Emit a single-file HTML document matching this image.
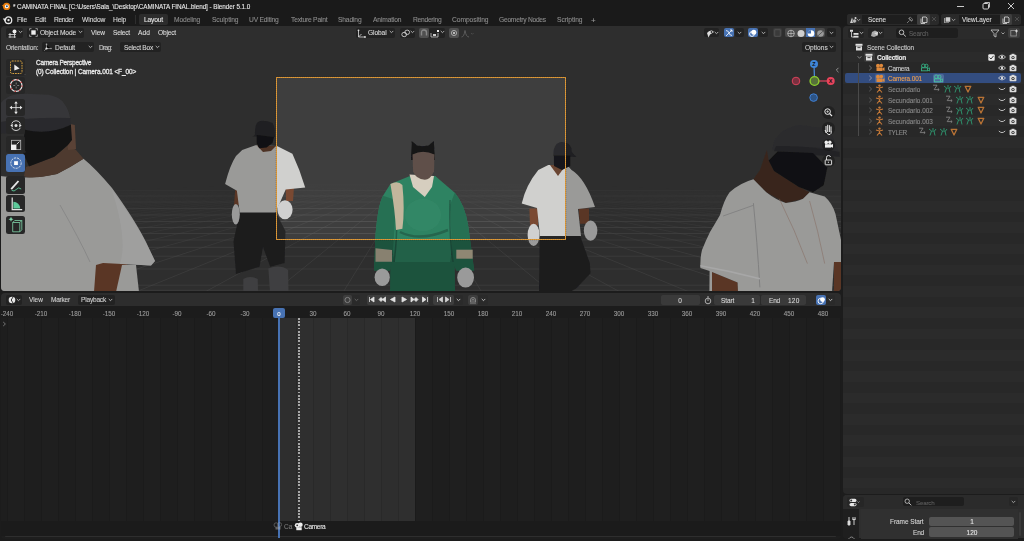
<!DOCTYPE html>
<html><head><meta charset="utf-8">
<style>
*{box-sizing:border-box;margin:0;padding:0}
html,body{-webkit-font-smoothing:antialiased;width:1024px;height:541px;overflow:hidden;background:#1c1c1c;font-family:"Liberation Sans",sans-serif;color:#d6d6d6;font-size:7px}
.a{position:absolute}
.t{position:absolute;white-space:nowrap;line-height:1;will-change:transform;-webkit-text-stroke:0.1px currentColor}
</style></head><body>

<div class="a" style="left:0.00px;top:0.00px;width:1024.00px;height:13.00px;background:#1a1a1a;border-radius:0px;"></div>
<svg class="a" style="left:1px;top:1px" width="10" height="10" viewBox="0 0 10 10"><circle cx="5.6" cy="5.4" r="3.6" fill="#e87d0d"/><path d="M0.8 4.2 L5 4.2 L3 6.6 Z" fill="#e87d0d"/><circle cx="5.8" cy="5.4" r="1.9" fill="#fff"/><circle cx="5.9" cy="5.3" r="1.0" fill="#265787"/></svg>
<div class="t" style="left:12.80px;top:4.39px;font-size:6.35px;color:#e8e8e8;font-weight:normal;letter-spacing:-0.059px;">* CAMINATA FINAL [C:\Users\Sala_\Desktop\CAMINATA FINAL.blend] - Blender 5.1.0</div>
<svg class="a" style="left:955px;top:1px" width="69" height="11" viewBox="0 0 69 11"><path d="M2 5.5 H9" stroke="#e0e0e0" stroke-width="0.9"/><rect x="28" y="2.5" width="5.5" height="5.5" rx="1" stroke="#e0e0e0" stroke-width="0.9" fill="none"/><path d="M29.5 1.5 H34.5 V6.5" stroke="#e0e0e0" stroke-width="0.8" fill="none"/><path d="M53 2 L59 8 M59 2 L53 8" stroke="#e0e0e0" stroke-width="0.9"/></svg>
<div class="a" style="left:0.00px;top:13.00px;width:1024.00px;height:13.00px;background:#1a1a1a;border-radius:0px;"></div>
<svg class="a" style="left:2px;top:14.5px" width="11" height="10" viewBox="0 0 11 10"><circle cx="6.4" cy="5.2" r="3.3" fill="none" stroke="#e6e6e6" stroke-width="1.3"/><circle cx="6.5" cy="5.1" r="1.2" fill="#e6e6e6"/><path d="M0.8 3.6 L5 3.6 L2.8 6.4 Z" fill="#e6e6e6"/></svg>
<div class="t" style="left:16.70px;top:17.29px;font-size:6.7px;color:#d8d8d8;font-weight:normal;letter-spacing:-0.224px;">File</div>
<div class="t" style="left:34.70px;top:17.29px;font-size:6.7px;color:#d8d8d8;font-weight:normal;letter-spacing:-0.161px;">Edit</div>
<div class="t" style="left:53.90px;top:17.29px;font-size:6.7px;color:#d8d8d8;font-weight:normal;letter-spacing:-0.413px;">Render</div>
<div class="t" style="left:81.60px;top:17.29px;font-size:6.7px;color:#d8d8d8;font-weight:normal;letter-spacing:-0.072px;">Window</div>
<div class="t" style="left:112.80px;top:17.29px;font-size:6.7px;color:#d8d8d8;font-weight:normal;letter-spacing:-0.195px;">Help</div>
<div class="a" style="left:134.60px;top:15.00px;width:0.80px;height:9.00px;background:#2e2e2e;border-radius:0px;"></div>
<div class="a" style="left:139.00px;top:14.00px;width:29.00px;height:10.80px;background:#2c2c2c;border-radius:2px;"></div>
<div class="t" style="left:144.00px;top:17.29px;font-size:6.7px;color:#e6e6e6;font-weight:normal;letter-spacing:-0.186px;">Layout</div>
<div class="t" style="left:173.80px;top:17.29px;font-size:6.7px;color:#8c8c8c;font-weight:normal;letter-spacing:-0.124px;">Modeling</div>
<div class="t" style="left:211.50px;top:17.29px;font-size:6.7px;color:#8c8c8c;font-weight:normal;letter-spacing:-0.118px;">Sculpting</div>
<div class="t" style="left:249.30px;top:17.29px;font-size:6.7px;color:#8c8c8c;font-weight:normal;letter-spacing:-0.196px;">UV Editing</div>
<div class="t" style="left:290.80px;top:17.29px;font-size:6.7px;color:#8c8c8c;font-weight:normal;letter-spacing:-0.208px;">Texture Paint</div>
<div class="t" style="left:338.00px;top:17.29px;font-size:6.7px;color:#8c8c8c;font-weight:normal;letter-spacing:-0.156px;">Shading</div>
<div class="t" style="left:372.50px;top:17.29px;font-size:6.7px;color:#8c8c8c;font-weight:normal;letter-spacing:-0.144px;">Animation</div>
<div class="t" style="left:412.50px;top:17.29px;font-size:6.7px;color:#8c8c8c;font-weight:normal;letter-spacing:-0.269px;">Rendering</div>
<div class="t" style="left:452.00px;top:17.29px;font-size:6.7px;color:#8c8c8c;font-weight:normal;letter-spacing:-0.067px;">Compositing</div>
<div class="t" style="left:499.00px;top:17.29px;font-size:6.7px;color:#8c8c8c;font-weight:normal;letter-spacing:-0.260px;">Geometry Nodes</div>
<div class="t" style="left:557.00px;top:17.29px;font-size:6.7px;color:#8c8c8c;font-weight:normal;letter-spacing:-0.063px;">Scripting</div>
<div class="t" style="left:590.50px;top:16.80px;font-size:8px;color:#9a9a9a;font-weight:normal;">+</div>
<div class="a" style="left:847.00px;top:14.00px;width:91.50px;height:10.90px;background:#2a2a2a;border-radius:2.5px;"></div>
<div class="a" style="left:862.00px;top:14.50px;width:55.00px;height:9.90px;background:#1e1e1e;border-radius:0px;"></div>
<div class="a" style="left:847.00px;top:14.00px;width:14.00px;height:10.90px;background:#2a2a2a;border-radius:2.5px;"></div>
<svg class="a" style="left:849px;top:15.5px" width="10" height="8" viewBox="0 0 10 8"><path d="M1 7 L3 1.5 L5 7 Z" fill="#ccc"/><circle cx="5.5" cy="5" r="2" fill="#bbb" stroke="#222" stroke-width="0.5"/><circle cx="6.5" cy="2" r="1" fill="#ddd"/></svg>
<svg class="a" style="left:856.00px;top:17.50px" width="5" height="4" viewBox="0 0 5 4"><path d="M1 1.2 L2.5 2.7 L4 1.2" stroke="#aaa" stroke-width="0.9" fill="none" stroke-linecap="round"/></svg>
<div class="t" style="left:867.60px;top:16.98px;font-size:6.4px;color:#dcdcdc;font-weight:normal;">Scene</div>
<svg class="a" style="left:906px;top:15.5px" width="8" height="8" viewBox="0 0 8 8"><path d="M1 7 L3.5 4.5 M3 2 L6 5 M4.2 1 L7 3.8 L5.4 5.2 L2.6 2.6 Z" stroke="#8a8a8a" stroke-width="0.8" fill="none"/></svg>
<div class="a" style="left:917.00px;top:14.30px;width:12.50px;height:10.30px;background:#3e3e3e;border-radius:1.5px;"></div>
<svg class="a" style="left:919.5px;top:15.5px" width="8" height="8" viewBox="0 0 8 8"><path d="M2.5 1 H6 L7 2 V6.5 H2.5 Z M1 2.5 V7.5 H5" stroke="#ddd" stroke-width="0.8" fill="none"/></svg>
<svg class="a" style="left:930.5px;top:16px" width="6" height="6" viewBox="0 0 6 6"><path d="M1 1 L5 5 M5 1 L1 5" stroke="#555" stroke-width="0.8"/></svg>
<div class="a" style="left:941.40px;top:14.00px;width:79.60px;height:10.90px;background:#2a2a2a;border-radius:2.5px;"></div>
<div class="a" style="left:959.00px;top:14.50px;width:40.50px;height:9.90px;background:#1e1e1e;border-radius:0px;"></div>
<div class="a" style="left:941.40px;top:14.00px;width:14.60px;height:10.90px;background:#2a2a2a;border-radius:2.5px;"></div>
<svg class="a" style="left:943px;top:15.5px" width="9" height="8" viewBox="0 0 9 8"><rect x="1" y="2" width="5" height="5" fill="#999"/><rect x="2.5" y="1" width="5" height="5" fill="#ccc" stroke="#222" stroke-width="0.5"/></svg>
<svg class="a" style="left:950.50px;top:17.50px" width="5" height="4" viewBox="0 0 5 4"><path d="M1 1.2 L2.5 2.7 L4 1.2" stroke="#aaa" stroke-width="0.9" fill="none" stroke-linecap="round"/></svg>
<div class="t" style="left:962.00px;top:16.98px;font-size:6.4px;color:#dcdcdc;font-weight:normal;">ViewLayer</div>
<div class="a" style="left:999.50px;top:14.30px;width:12.50px;height:10.30px;background:#3e3e3e;border-radius:1.5px;"></div>
<svg class="a" style="left:1002px;top:15.5px" width="8" height="8" viewBox="0 0 8 8"><path d="M2.5 1 H6 L7 2 V6.5 H2.5 Z M1 2.5 V7.5 H5" stroke="#ddd" stroke-width="0.8" fill="none"/></svg>
<svg class="a" style="left:1013.5px;top:16px" width="6" height="6" viewBox="0 0 6 6"><path d="M1 1 L5 5 M5 1 L1 5" stroke="#555" stroke-width="0.8"/></svg>
<div class="a" style="left:1px;top:26px;width:840px;height:265px;border-radius:4px;overflow:hidden">
<svg width="840" height="265" viewBox="1 26 840 265" style="position:absolute;left:0;top:0"><defs><linearGradient id="fade" x1="0" y1="0" x2="0" y2="1"><stop offset="0" stop-color="#fff" stop-opacity="0"/><stop offset="1" stop-color="#fff" stop-opacity="1"/></linearGradient></defs><rect x="1" y="26" width="840" height="265" fill="#3e3e3e"/><mask id="gm"><rect x="0" y="0" width="1024" height="541" fill="#000"/><rect x="0" y="185" width="1024" height="70" fill="url(#fade)"/><rect x="0" y="254.5" width="1024" height="80" fill="#fff"/></mask><g><path d="M1 290.30 H841" stroke="#5c5c5c" stroke-opacity="0.62" stroke-width="1"/><path d="M1 285.20 H841" stroke="#5c5c5c" stroke-opacity="0.62" stroke-width="1"/><path d="M1 269.00 H841" stroke="#5c5c5c" stroke-opacity="0.62" stroke-width="1"/><path d="M1 256.20 H841" stroke="#5c5c5c" stroke-opacity="0.62" stroke-width="1"/><path d="M1 247.30 H841" stroke="#5c5c5c" stroke-opacity="0.62" stroke-width="1"/><path d="M1 240.00 H841" stroke="#5c5c5c" stroke-opacity="0.62" stroke-width="1"/><path d="M1 233.50 H841" stroke="#5c5c5c" stroke-opacity="0.62" stroke-width="1"/><path d="M1 227.50 H841" stroke="#5c5c5c" stroke-opacity="0.62" stroke-width="1"/><path d="M1 221.50 H841" stroke="#5c5c5c" stroke-opacity="0.62" stroke-width="1"/><path d="M1 215.00 H841" stroke="#5c5c5c" stroke-opacity="0.54" stroke-width="1"/><path d="M1 208.50 H841" stroke="#5c5c5c" stroke-opacity="0.45" stroke-width="1"/><path d="M1 202.00 H841" stroke="#5c5c5c" stroke-opacity="0.36" stroke-width="1"/><path d="M1 196.00 H841" stroke="#5c5c5c" stroke-opacity="0.28" stroke-width="1"/><path d="M1 190.50 H841" stroke="#5c5c5c" stroke-opacity="0.20" stroke-width="1"/><path d="M1 185.00 H841" stroke="#5c5c5c" stroke-opacity="0.12" stroke-width="1"/><path d="M1 180.00 H841" stroke="#5c5c5c" stroke-opacity="0.06" stroke-width="1"/></g><g mask="url(#gm)"><path d="M314.96 183.00 L-2552.59 300.00" stroke="#5c5c5c" stroke-opacity="0.55" stroke-width="1"/><path d="M317.41 183.00 L-2478.46 300.00" stroke="#5c5c5c" stroke-opacity="0.55" stroke-width="1"/><path d="M319.86 183.00 L-2404.34 300.00" stroke="#5c5c5c" stroke-opacity="0.55" stroke-width="1"/><path d="M322.32 183.00 L-2330.21 300.00" stroke="#5c5c5c" stroke-opacity="0.55" stroke-width="1"/><path d="M324.77 183.00 L-2256.09 300.00" stroke="#5c5c5c" stroke-opacity="0.55" stroke-width="1"/><path d="M327.22 183.00 L-2181.96 300.00" stroke="#5c5c5c" stroke-opacity="0.55" stroke-width="1"/><path d="M329.67 183.00 L-2107.83 300.00" stroke="#5c5c5c" stroke-opacity="0.55" stroke-width="1"/><path d="M332.12 183.00 L-2033.71 300.00" stroke="#5c5c5c" stroke-opacity="0.55" stroke-width="1"/><path d="M334.57 183.00 L-1959.58 300.00" stroke="#5c5c5c" stroke-opacity="0.55" stroke-width="1"/><path d="M337.02 183.00 L-1885.45 300.00" stroke="#5c5c5c" stroke-opacity="0.55" stroke-width="1"/><path d="M339.47 183.00 L-1811.33 300.00" stroke="#5c5c5c" stroke-opacity="0.55" stroke-width="1"/><path d="M341.92 183.00 L-1737.20 300.00" stroke="#5c5c5c" stroke-opacity="0.55" stroke-width="1"/><path d="M344.37 183.00 L-1663.08 300.00" stroke="#5c5c5c" stroke-opacity="0.55" stroke-width="1"/><path d="M346.82 183.00 L-1588.95 300.00" stroke="#5c5c5c" stroke-opacity="0.55" stroke-width="1"/><path d="M349.27 183.00 L-1514.82 300.00" stroke="#5c5c5c" stroke-opacity="0.55" stroke-width="1"/><path d="M351.72 183.00 L-1440.70 300.00" stroke="#5c5c5c" stroke-opacity="0.55" stroke-width="1"/><path d="M354.17 183.00 L-1366.57 300.00" stroke="#5c5c5c" stroke-opacity="0.55" stroke-width="1"/><path d="M356.62 183.00 L-1292.45 300.00" stroke="#5c5c5c" stroke-opacity="0.55" stroke-width="1"/><path d="M359.07 183.00 L-1218.32 300.00" stroke="#5c5c5c" stroke-opacity="0.55" stroke-width="1"/><path d="M361.52 183.00 L-1144.19 300.00" stroke="#5c5c5c" stroke-opacity="0.55" stroke-width="1"/><path d="M363.97 183.00 L-1070.07 300.00" stroke="#5c5c5c" stroke-opacity="0.55" stroke-width="1"/><path d="M366.42 183.00 L-995.94 300.00" stroke="#5c5c5c" stroke-opacity="0.55" stroke-width="1"/><path d="M368.87 183.00 L-921.82 300.00" stroke="#5c5c5c" stroke-opacity="0.55" stroke-width="1"/><path d="M371.32 183.00 L-847.69 300.00" stroke="#5c5c5c" stroke-opacity="0.55" stroke-width="1"/><path d="M373.77 183.00 L-773.56 300.00" stroke="#5c5c5c" stroke-opacity="0.55" stroke-width="1"/><path d="M376.23 183.00 L-699.44 300.00" stroke="#5c5c5c" stroke-opacity="0.55" stroke-width="1"/><path d="M378.68 183.00 L-625.31 300.00" stroke="#5c5c5c" stroke-opacity="0.55" stroke-width="1"/><path d="M381.13 183.00 L-551.18 300.00" stroke="#5c5c5c" stroke-opacity="0.55" stroke-width="1"/><path d="M383.58 183.00 L-477.06 300.00" stroke="#5c5c5c" stroke-opacity="0.55" stroke-width="1"/><path d="M386.03 183.00 L-402.93 300.00" stroke="#5c5c5c" stroke-opacity="0.55" stroke-width="1"/><path d="M388.48 183.00 L-328.81 300.00" stroke="#5c5c5c" stroke-opacity="0.55" stroke-width="1"/><path d="M390.93 183.00 L-254.68 300.00" stroke="#5c5c5c" stroke-opacity="0.55" stroke-width="1"/><path d="M393.38 183.00 L-180.55 300.00" stroke="#5c5c5c" stroke-opacity="0.55" stroke-width="1"/><path d="M395.83 183.00 L-106.43 300.00" stroke="#5c5c5c" stroke-opacity="0.55" stroke-width="1"/><path d="M398.28 183.00 L-32.30 300.00" stroke="#5c5c5c" stroke-opacity="0.55" stroke-width="1"/><path d="M400.73 183.00 L41.82 300.00" stroke="#5c5c5c" stroke-opacity="0.55" stroke-width="1"/><path d="M403.18 183.00 L115.95 300.00" stroke="#5c5c5c" stroke-opacity="0.55" stroke-width="1"/><path d="M405.63 183.00 L190.08 300.00" stroke="#5c5c5c" stroke-opacity="0.55" stroke-width="1"/><path d="M408.08 183.00 L264.20 300.00" stroke="#5c5c5c" stroke-opacity="0.55" stroke-width="1"/><path d="M410.53 183.00 L338.33 300.00" stroke="#5c5c5c" stroke-opacity="0.55" stroke-width="1"/><path d="M412.98 183.00 L412.45 300.00" stroke="#5c5c5c" stroke-opacity="0.55" stroke-width="1"/><path d="M415.43 183.00 L486.58 300.00" stroke="#5c5c5c" stroke-opacity="0.55" stroke-width="1"/><path d="M417.88 183.00 L560.71 300.00" stroke="#5c5c5c" stroke-opacity="0.55" stroke-width="1"/><path d="M420.33 183.00 L634.83 300.00" stroke="#5c5c5c" stroke-opacity="0.55" stroke-width="1"/><path d="M422.78 183.00 L708.96 300.00" stroke="#5c5c5c" stroke-opacity="0.55" stroke-width="1"/><path d="M425.23 183.00 L783.09 300.00" stroke="#5c5c5c" stroke-opacity="0.55" stroke-width="1"/><path d="M427.68 183.00 L857.21 300.00" stroke="#5c5c5c" stroke-opacity="0.55" stroke-width="1"/><path d="M430.14 183.00 L931.34 300.00" stroke="#5c5c5c" stroke-opacity="0.55" stroke-width="1"/><path d="M432.59 183.00 L1005.46 300.00" stroke="#5c5c5c" stroke-opacity="0.55" stroke-width="1"/><path d="M435.04 183.00 L1079.59 300.00" stroke="#5c5c5c" stroke-opacity="0.55" stroke-width="1"/><path d="M437.49 183.00 L1153.72 300.00" stroke="#5c5c5c" stroke-opacity="0.55" stroke-width="1"/><path d="M439.94 183.00 L1227.84 300.00" stroke="#5c5c5c" stroke-opacity="0.55" stroke-width="1"/><path d="M442.39 183.00 L1301.97 300.00" stroke="#5c5c5c" stroke-opacity="0.55" stroke-width="1"/><path d="M444.84 183.00 L1376.09 300.00" stroke="#5c5c5c" stroke-opacity="0.55" stroke-width="1"/><path d="M447.29 183.00 L1450.22 300.00" stroke="#5c5c5c" stroke-opacity="0.55" stroke-width="1"/><path d="M449.74 183.00 L1524.35 300.00" stroke="#5c5c5c" stroke-opacity="0.55" stroke-width="1"/><path d="M452.19 183.00 L1598.47 300.00" stroke="#5c5c5c" stroke-opacity="0.55" stroke-width="1"/><path d="M454.64 183.00 L1672.60 300.00" stroke="#5c5c5c" stroke-opacity="0.55" stroke-width="1"/><path d="M457.09 183.00 L1746.73 300.00" stroke="#5c5c5c" stroke-opacity="0.55" stroke-width="1"/><path d="M459.54 183.00 L1820.85 300.00" stroke="#5c5c5c" stroke-opacity="0.55" stroke-width="1"/><path d="M461.99 183.00 L1894.98 300.00" stroke="#5c5c5c" stroke-opacity="0.55" stroke-width="1"/><path d="M464.44 183.00 L1969.10 300.00" stroke="#5c5c5c" stroke-opacity="0.55" stroke-width="1"/><path d="M466.89 183.00 L2043.23 300.00" stroke="#5c5c5c" stroke-opacity="0.55" stroke-width="1"/><path d="M469.34 183.00 L2117.36 300.00" stroke="#5c5c5c" stroke-opacity="0.55" stroke-width="1"/><path d="M471.79 183.00 L2191.48 300.00" stroke="#5c5c5c" stroke-opacity="0.55" stroke-width="1"/><path d="M474.24 183.00 L2265.61 300.00" stroke="#5c5c5c" stroke-opacity="0.55" stroke-width="1"/><path d="M476.69 183.00 L2339.73 300.00" stroke="#5c5c5c" stroke-opacity="0.55" stroke-width="1"/><path d="M479.14 183.00 L2413.86 300.00" stroke="#5c5c5c" stroke-opacity="0.55" stroke-width="1"/><path d="M481.59 183.00 L2487.99 300.00" stroke="#5c5c5c" stroke-opacity="0.55" stroke-width="1"/><path d="M484.05 183.00 L2562.11 300.00" stroke="#5c5c5c" stroke-opacity="0.55" stroke-width="1"/><path d="M486.50 183.00 L2636.24 300.00" stroke="#5c5c5c" stroke-opacity="0.55" stroke-width="1"/><path d="M488.95 183.00 L2710.36 300.00" stroke="#5c5c5c" stroke-opacity="0.55" stroke-width="1"/><path d="M491.40 183.00 L2784.49 300.00" stroke="#5c5c5c" stroke-opacity="0.55" stroke-width="1"/><path d="M493.85 183.00 L2858.62 300.00" stroke="#5c5c5c" stroke-opacity="0.55" stroke-width="1"/><path d="M496.30 183.00 L2932.74 300.00" stroke="#5c5c5c" stroke-opacity="0.55" stroke-width="1"/><path d="M498.75 183.00 L3006.87 300.00" stroke="#5c5c5c" stroke-opacity="0.55" stroke-width="1"/><path d="M501.20 183.00 L3081.00 300.00" stroke="#5c5c5c" stroke-opacity="0.55" stroke-width="1"/><path d="M503.65 183.00 L3155.12 300.00" stroke="#5c5c5c" stroke-opacity="0.55" stroke-width="1"/><path d="M506.10 183.00 L3229.25 300.00" stroke="#5c5c5c" stroke-opacity="0.55" stroke-width="1"/><path d="M508.55 183.00 L3303.37 300.00" stroke="#5c5c5c" stroke-opacity="0.55" stroke-width="1"/><path d="M511.00 183.00 L3377.50 300.00" stroke="#5c5c5c" stroke-opacity="0.55" stroke-width="1"/></g><filter id="bl" x="-5%" y="-5%" width="110%" height="110%"><feGaussianBlur stdDeviation="0.55"/></filter><g filter="url(#bl)"><path d="M95.7 262.0 L128.0 262.0 L118.0 292.0 L93.0 292.0 Z" fill="#7a4830" /><path d="M0 176 Q30 180 57 174 Q72 166 83.5 158.8 Q95 168 112 188 Q135 220 146 242 L155 261 L151 265.5 L103 263 L96 265 L94 292 L0 292 Z" fill="#d0d0ce"/><path d="M112 190 Q135 222 146 243 L155 261 L151 265.5 L120 264 Q128 240 112 190 Z" fill="#dadada" opacity="0.7"/><path d="M60 205 Q80 240 90 262" stroke="#a8a8a8" stroke-width="1" fill="none" opacity="0.6"/><path d="M122.0 265.0 L136.0 265.0 L139.0 292.0 L116.0 292.0 Z" fill="#d0d0ce" /><path d="M26 167 L54.4 156.8 L68 145 L76 150 L83.5 158.8 Q70 168 57 174 Q30 180 24 176 Z" fill="#6a5040"/><path d="M66.0 123.0 L74.8 125.0 L76.0 149.0 L68.0 150.0 Z" fill="#7a5a48" /><path d="M0 104 Q8 93 25.2 93.7 L48.5 94.7 Q60 97 64 103.4 Q69 110 70 118 L70.9 126 Q48 135 25 131 L0 133 Z" fill="#4a4a4e"/><path d="M0 122 Q30 117 70.5 118 L70.9 126 Q50 137 25 131 L0 134 Z" fill="#38383c"/><path d="M25 129.7 Q48.5 135.5 70.9 124.8 L72 140 L68 145 L54.4 156.8 L29 166.5 L22 150 Z" fill="#1c1c1e"/><path d="M243.3 279 Q250 275 257.7 279 L258 292 L243.3 292 Z" fill="#565658"/><path d="M268.4 268.5 Q280 264 288.1 270 L288.5 292 L270 292 Z" fill="#565658"/><path d="M239.7 212.0 L275.6 212.0 L285.5 230.9 L284.6 263.1 L270.2 266.7 L263.0 247.0 L259.5 266.7 L236.0 274.0 L233.5 241.6 Z" fill="#262628" /><path d="M235.2 190.0 L245.0 190.0 L243.0 205.0 L234.0 205.0 Z" fill="#7a4830" /><path d="M285.7 187.0 L294.0 187.0 L293.0 201.0 L286.0 201.0 Z" fill="#7a4830" /><ellipse cx="235.8" cy="214.3" rx="4" ry="10.2" fill="#d0d0d0" /><ellipse cx="285" cy="209.8" rx="7.6" ry="9.5" fill="#d0d0d0" /><path d="M242.2 150 L255.5 145.3 L277 146 L292.4 153.7 Q300 170 305.2 187.4 L285.7 189.5 L275.6 212.6 L239.7 212.6 L236.9 190.8 L225.1 184 Q230 165 236 156 Z" fill="#d0d0ce"/><path d="M257.0 145.5 L276.0 146.0 L271.0 151.0 L263.0 152.0 Z" fill="#6a4432" /><path d="M252.6 136.4 L254.8 135 Q255 123 258.5 121.7 Q264 119.5 272.5 123.1 Q275 127 274.8 133.5 L275 137 Z" fill="#2a2a2d"/><path d="M256.6 135.0 L274.0 137.0 L272.5 143.1 L266.6 147.5 L259.2 148.3 L256.6 143.1 Z" fill="#18181a" /><path d="M390.4 255.0 L454.8 255.0 L455.0 292.0 L390.0 292.0 Z" fill="#286f53" /><path d="M390.4 183.9 L410 176 L435.3 176 L442.8 182.4 L454.8 192.8 Q465 205 468.2 225.8 L474.2 270.6 L456.3 270.6 L452 250 L450 262 L395 262 L392 250 L390 270.6 L374 270.6 L375.5 234.7 Q378 205 383 195.8 Z" fill="#2f8362"/><path d="M396 200 Q394 240 392 262 L390 270.6 L374 270.6 L375.5 234.7 Q378 205 383 195.8 Z" fill="#286f53"/><path d="M450 205 Q452 240 452 262 L456.3 270.6 L474.2 270.6 L468.2 225.8 Q465 205 454.8 192.8 Z" fill="#286f53"/><path d="M400 232 Q420 242 448 230" stroke="#1f5240" stroke-width="2.5" fill="none" opacity="0.6"/><ellipse cx="423" cy="215" rx="18" ry="16" fill="#3a9070" opacity="0.35"/><path d="M396 200 Q398 235 394 262 M450 200 Q449 235 453 262" stroke="#1f5240" stroke-width="1.5" fill="none" opacity="0.7"/><path d="M390.4 183.9 Q398 180 402.4 185 Q405 210 402.4 228.7 L396 230 Q395 210 390.4 183.9 Z" fill="#c2b69c"/><path d="M375.5 248.2 L392.0 250.0 L392.0 261.7 L375.5 261.7 Z" fill="#b8ae98" /><path d="M456.3 249.7 L472.7 249.7 L472.7 258.7 L456.3 258.7 Z" fill="#c2b69c" /><ellipse cx="382.2" cy="277.3" rx="7.6" ry="8.8" fill="#d0d0d0" /><ellipse cx="465.6" cy="277.6" rx="8.4" ry="10" fill="#d0d0d0" /><path d="M409.5 174.6 L434.0 175.9 L432.0 187.0 L424.8 197.0 L413.0 187.0 Z" fill="#d6cebf" /><path d="M411 160 L411.8 141 L417 145.5 L422.8 146.2 L428.5 145.5 L433.8 141 L435 160 Z" fill="#141416"/><path d="M412.5 154.6 Q422.8 149 434.5 154.6 L434 171.4 Q430 179.8 424.8 179.8 Q416 179 413.1 171.4 Z" fill="#5e5048"/><path d="M540.4 234.0 L579.5 234.0 L589.8 263.0 L590.6 273.2 L576.1 288.5 L570.0 292.0 L539.0 292.0 L539.6 242.5 Z" fill="#262628" /><path d="M529.4 208.5 L537.9 208.5 L538.0 225.5 L530.0 225.5 Z" fill="#7a4830" /><path d="M578.7 208.5 L589.0 208.5 L589.0 223.8 L580.0 223.8 Z" fill="#7a4830" /><ellipse cx="533.6" cy="234.9" rx="6" ry="11.1" fill="#d0d0d0" /><ellipse cx="590.6" cy="230.6" rx="6.8" ry="10.2" fill="#d0d0d0" /><path d="M538.3 170 L548.3 165 L567 165 L571.6 170 Q585 178 595 207 L578 209 L581 236 L540 236 L537 208 L521.7 203.4 Q526 185 538.3 170 Z" fill="#d0d0ce"/><path d="M550.0 165.0 L566.0 165.0 L558.0 176.0 Z" fill="#6a4432" /><path d="M553.3 156 Q553.3 142 562 142 Q571.8 142 571.8 152 L576.3 157 Z" fill="#2a2a2d"/><path d="M553.9 155.4 L570.3 155.4 L570.3 166.0 L562.0 170.0 L554.0 166.0 Z" fill="#18181a" /><path d="M712.0 272.0 L737.6 282.6 L738.0 292.0 L712.0 292.0 Z" fill="#7a4830" /><path d="M834.0 262.0 L841.0 262.0 L841.0 292.0 L834.0 292.0 Z" fill="#7a4830" /><path d="M753.4 179.3 L760.0 170.0 L766.9 149.7 L768.7 160.4 L774.0 171.0 L798.9 187.0 L809.6 192.3 L803.0 198.8 L785.8 203.1 L766.3 192.3 Z" fill="#4e3327" /><path d="M753.4 179.3 Q760 186 766.3 192.3 Q776 200 785.8 203.1 Q796 202 803 198.8 L809.6 192.3 L824.7 196.6 Q832 203 835.5 213.9 L841 240 L841 262 L834 262 L832 292 L738 292 L737.6 282.6 L712 272 L712 292 L709.4 292 L709.6 271 L700.4 268 Q700 258 702 250 Q706 240 710 232 Q716 222 720 215 Q724 200 729.6 192.3 Q740 183 753.4 179.3 Z" fill="#d0d0ce"/><path d="M772.2 150 Q774 130 798.9 124.9 L827.3 128.4 Q836 140 839.7 156.8 L813 153.3 Z" fill="#3a3a3e"/><path d="M776 146 Q810 145 839.7 152 L839.7 156.8 L813 155 L774 151 Z" fill="#2e2e32"/><path d="M768.7 160.4 L777.6 151.5 L813.0 153.0 L827.3 167.5 L823.7 185.2 L813.0 192.3 L798.9 187.0 L774.0 171.0 Z" fill="#18181a" /><path d="M753.4 203.1 Q757 240 759.9 287.4" stroke="#a9a9a9" stroke-width="0.9" fill="none"/><path d="M723.1 216 L753.4 205.3" stroke="#a9a9a9" stroke-width="0.8" fill="none"/><path d="M700.4 265.8 Q730 271 759.9 278.8" stroke="#e2e2e2" stroke-width="1.6" fill="none"/><path d="M779.3 198.8 Q795 230 807.4 263.6 M809.6 201 Q818 230 824.7 263.6" stroke="#b08878" stroke-width="0.6" fill="none" opacity="0.8"/></g><path d="M0 0 H1024 V541 H0 Z M276.5 77.5 H565.5 V239.5 H276.5 Z" fill="#000" fill-opacity="0.26" fill-rule="evenodd"/><rect x="276.5" y="77.5" width="289.0" height="162.0" fill="none" stroke="#e09a38" stroke-width="1"/><rect x="276.0" y="77.0" width="290.0" height="163.0" fill="none" stroke="#000" stroke-opacity="0.35" stroke-width="0.5" stroke-dasharray="1 1"/></svg>
</div>
<div class="a" style="left:6.40px;top:27.60px;width:16.60px;height:10.00px;background:rgba(20,20,20,0.45);border-radius:2px;"></div>
<svg class="a" style="left:8px;top:28.5px" width="11" height="9" viewBox="0 0 11 9"><path d="M0.5 5.5 H8 M0.5 8 H8 M2 4 V8.8 M6.5 4 V8.8" stroke="#ddd" stroke-width="0.8"/><circle cx="6.5" cy="2.6" r="2" fill="#eee"/></svg>
<svg class="a" style="left:17.50px;top:30.10px" width="5" height="4" viewBox="0 0 5 4"><path d="M1 1.2 L2.5 2.7 L4 1.2" stroke="#bbb" stroke-width="0.9" fill="none" stroke-linecap="round"/></svg>
<div class="a" style="left:27.00px;top:27.60px;width:57.40px;height:10.00px;background:rgba(20,20,20,0.45);border-radius:2px;"></div>
<svg class="a" style="left:28.5px;top:28.3px" width="9" height="9" viewBox="0 0 9 9"><rect x="2.3" y="2.3" width="4.4" height="4.4" fill="#eee"/><path d="M0.6 2.5 V0.6 H2.5 M6.5 0.6 H8.4 V2.5 M8.4 6.5 V8.4 H6.5 M2.5 8.4 H0.6 V6.5" stroke="#bbb" stroke-width="0.7" fill="none"/></svg>
<div class="t" style="left:39.60px;top:30.12px;font-size:6.6px;color:#dadada;font-weight:normal;letter-spacing:-0.129px;">Object Mode</div>
<svg class="a" style="left:78.00px;top:30.10px" width="5" height="4" viewBox="0 0 5 4"><path d="M1 1.2 L2.5 2.7 L4 1.2" stroke="#bbb" stroke-width="0.9" fill="none" stroke-linecap="round"/></svg>
<div class="t" style="left:91.00px;top:30.12px;font-size:6.6px;color:#dadada;font-weight:normal;letter-spacing:-0.047px;">View</div>
<div class="t" style="left:113.00px;top:30.12px;font-size:6.6px;color:#dadada;font-weight:normal;letter-spacing:-0.224px;">Select</div>
<div class="t" style="left:138.00px;top:30.12px;font-size:6.6px;color:#dadada;font-weight:normal;letter-spacing:0.085px;">Add</div>
<div class="t" style="left:158.00px;top:30.12px;font-size:6.6px;color:#dadada;font-weight:normal;letter-spacing:-0.179px;">Object</div>
<div class="a" style="left:355.60px;top:27.60px;width:39.40px;height:10.00px;background:rgba(20,20,20,0.45);border-radius:2px;"></div>
<svg class="a" style="left:357px;top:28.5px" width="9" height="9" viewBox="0 0 9 9"><path d="M1.5 8 V1 M1.5 8 H8 M1.5 8 L4.5 5" stroke="#ddd" stroke-width="0.8"/><circle cx="1.5" cy="1.3" r="0.9" fill="#ddd"/><circle cx="8" cy="8" r="0.9" fill="#ddd"/></svg>
<div class="t" style="left:368.00px;top:30.12px;font-size:6.6px;color:#dadada;font-weight:normal;letter-spacing:-0.080px;">Global</div>
<svg class="a" style="left:388.50px;top:30.10px" width="5" height="4" viewBox="0 0 5 4"><path d="M1 1.2 L2.5 2.7 L4 1.2" stroke="#bbb" stroke-width="0.9" fill="none" stroke-linecap="round"/></svg>
<div class="a" style="left:400.00px;top:27.60px;width:15.00px;height:10.00px;background:rgba(20,20,20,0.45);border-radius:2px;"></div>
<svg class="a" style="left:401px;top:28.5px" width="10" height="9" viewBox="0 0 10 9"><ellipse cx="3.2" cy="5.5" rx="2.4" ry="2.2" fill="none" stroke="#ddd" stroke-width="0.8"/><ellipse cx="6.2" cy="3.3" rx="2.4" ry="2.2" fill="none" stroke="#ddd" stroke-width="0.8"/></svg>
<svg class="a" style="left:409.50px;top:30.10px" width="5" height="4" viewBox="0 0 5 4"><path d="M1 1.2 L2.5 2.7 L4 1.2" stroke="#bbb" stroke-width="0.9" fill="none" stroke-linecap="round"/></svg>
<div class="a" style="left:418.70px;top:27.60px;width:10.00px;height:10.00px;background:#505050;border-radius:2px;"></div>
<svg class="a" style="left:419.5px;top:28.5px" width="8" height="8" viewBox="0 0 8 8"><path d="M1.5 6.5 V3.5 Q1.5 1 4 1 Q6.5 1 6.5 3.5 V6.5" stroke="#888" stroke-width="1.4" fill="none"/></svg>
<div class="a" style="left:428.70px;top:27.60px;width:16.30px;height:10.00px;background:rgba(20,20,20,0.45);border-radius:2px;"></div>
<svg class="a" style="left:430px;top:28.5px" width="10" height="9" viewBox="0 0 10 9"><path d="M1 4 V8 H8 V4" stroke="#ccc" stroke-width="0.8" fill="none"/><rect x="3" y="5" width="3" height="2" fill="#ccc"/><rect x="7" y="1" width="2" height="2" fill="#eee"/></svg>
<svg class="a" style="left:439.50px;top:30.10px" width="5" height="4" viewBox="0 0 5 4"><path d="M1 1.2 L2.5 2.7 L4 1.2" stroke="#bbb" stroke-width="0.9" fill="none" stroke-linecap="round"/></svg>
<div class="a" style="left:449.00px;top:27.60px;width:10.40px;height:10.00px;background:#505050;border-radius:2px;"></div>
<svg class="a" style="left:450px;top:28.6px" width="8" height="8" viewBox="0 0 8 8"><circle cx="4" cy="4" r="2.6" fill="none" stroke="#bbb" stroke-width="0.8"/><circle cx="4" cy="4" r="1" fill="#ddd"/></svg>
<svg class="a" style="left:461px;top:28.5px" width="14" height="9" viewBox="0 0 14 9"><path d="M0.5 8 Q3 8 4 1.5 Q5 8 8 8" stroke="#666" stroke-width="0.8" fill="none"/><path d="M10 4 L11.3 5.3 L12.6 4" stroke="#555" stroke-width="0.7" fill="none"/></svg>
<div class="a" style="left:704.40px;top:28.20px;width:15.10px;height:9.10px;background:rgba(20,20,20,0.45);border-radius:2px;"></div>
<svg class="a" style="left:705.5px;top:28.5px" width="9" height="9" viewBox="0 0 9 9"><path d="M1 4 Q3 1 6 1.5 L8 3 L4 5.5 L2.5 8.5 Z" fill="#ddd"/><circle cx="5.5" cy="3" r="0.9" fill="#333"/></svg>
<svg class="a" style="left:713.50px;top:30.70px" width="5" height="4" viewBox="0 0 5 4"><path d="M1 1.2 L2.5 2.7 L4 1.2" stroke="#bbb" stroke-width="0.9" fill="none" stroke-linecap="round"/></svg>
<div class="a" style="left:724.00px;top:28.20px;width:10.00px;height:9.10px;background:#4772b3;border-radius:2px;"></div>
<svg class="a" style="left:725px;top:28.7px" width="8" height="8" viewBox="0 0 8 8"><path d="M1 7 L7 1 M1 1.5 Q4 2 4 4 M7 6.5 Q4 6 4 4 M5 1 H7 V3" stroke="#fff" stroke-width="0.8" fill="none"/></svg>
<div class="a" style="left:734.50px;top:28.20px;width:9.20px;height:9.10px;background:rgba(20,20,20,0.45);border-radius:2px;"></div>
<svg class="a" style="left:736.50px;top:30.70px" width="5" height="4" viewBox="0 0 5 4"><path d="M1 1.2 L2.5 2.7 L4 1.2" stroke="#bbb" stroke-width="0.9" fill="none" stroke-linecap="round"/></svg>
<div class="a" style="left:748.30px;top:28.20px;width:9.70px;height:9.10px;background:#4772b3;border-radius:2px;"></div>
<svg class="a" style="left:749px;top:28.7px" width="8" height="8" viewBox="0 0 8 8"><circle cx="3" cy="5" r="2.4" fill="none" stroke="#fff" stroke-width="0.9"/><circle cx="4.8" cy="3.3" r="2.5" fill="#fff"/></svg>
<div class="a" style="left:758.00px;top:28.20px;width:10.00px;height:9.10px;background:rgba(20,20,20,0.45);border-radius:2px;"></div>
<svg class="a" style="left:760.50px;top:30.70px" width="5" height="4" viewBox="0 0 5 4"><path d="M1 1.2 L2.5 2.7 L4 1.2" stroke="#bbb" stroke-width="0.9" fill="none" stroke-linecap="round"/></svg>
<div class="a" style="left:772.50px;top:28.20px;width:9.10px;height:9.10px;background:rgba(70,70,70,0.5);border-radius:2px;"></div>
<svg class="a" style="left:773.5px;top:29px" width="7" height="8" viewBox="0 0 7 8"><rect x="0.8" y="0.8" width="5.4" height="6.4" fill="none" stroke="#5a5a5a" stroke-width="0.7"/></svg>
<div class="a" style="left:785.40px;top:28.20px;width:40.10px;height:9.10px;background:#4a4a4a;border-radius:2px;"></div>
<div class="a" style="left:806.30px;top:28.20px;width:9.00px;height:9.10px;background:#4772b3;border-radius:0px;"></div>
<svg class="a" style="left:786px;top:28.5px" width="40" height="9" viewBox="0 0 40 9"><circle cx="5" cy="4.5" r="3.3" fill="none" stroke="#ccc" stroke-width="0.7"/><path d="M1.7 4.5 H8.3 M5 1.2 V7.8" stroke="#ccc" stroke-width="0.6"/><circle cx="15" cy="4.5" r="3.5" fill="#cfcfcf"/><circle cx="25" cy="4.5" r="3.3" fill="#fff"/><path d="M25 1.2 V4.5 H21.7 A3.3 3.3 0 0 1 25 1.2 Z" fill="#4772b3"/><circle cx="34.5" cy="4.5" r="3.3" fill="#9a9a9a"/><path d="M32 6.8 L37 2.2" stroke="#555" stroke-width="0.9"/></svg>
<div class="a" style="left:827.00px;top:28.20px;width:9.00px;height:9.10px;background:rgba(20,20,20,0.45);border-radius:2px;"></div>
<svg class="a" style="left:829.00px;top:30.70px" width="5" height="4" viewBox="0 0 5 4"><path d="M1 1.2 L2.5 2.7 L4 1.2" stroke="#bbb" stroke-width="0.9" fill="none" stroke-linecap="round"/></svg>
<div class="a" style="left:802.00px;top:42.20px;width:34.00px;height:9.80px;background:rgba(20,20,20,0.45);border-radius:2px;"></div>
<div class="t" style="left:805.00px;top:45.12px;font-size:6.6px;color:#d0d0d0;font-weight:normal;letter-spacing:-0.007px;">Options</div>
<svg class="a" style="left:829.00px;top:45.20px" width="5" height="4" viewBox="0 0 5 4"><path d="M1 1.2 L2.5 2.7 L4 1.2" stroke="#bbb" stroke-width="0.9" fill="none" stroke-linecap="round"/></svg>
<div class="t" style="left:6.00px;top:45.02px;font-size:6.6px;color:#cfcfcf;font-weight:normal;letter-spacing:-0.143px;">Orientation:</div>
<div class="a" style="left:41.60px;top:42.00px;width:52.40px;height:10.00px;background:rgba(20,20,20,0.45);border-radius:2px;"></div>
<svg class="a" style="left:43px;top:42.5px" width="9" height="9" viewBox="0 0 9 9"><circle cx="3.5" cy="1.2" r="0.8" fill="#bbb"/><path d="M3.5 2 V5.5 H7.5 M3.5 5.5 L1.2 7.8" stroke="#bbb" stroke-width="0.6"/><circle cx="3.5" cy="5.5" r="1.1" fill="#eee"/><circle cx="8" cy="5.5" r="0.7" fill="#bbb"/></svg>
<div class="t" style="left:55.00px;top:45.02px;font-size:6.6px;color:#d6d6d6;font-weight:normal;letter-spacing:-0.130px;">Default</div>
<svg class="a" style="left:87.50px;top:45.20px" width="5" height="4" viewBox="0 0 5 4"><path d="M1 1.2 L2.5 2.7 L4 1.2" stroke="#bbb" stroke-width="0.9" fill="none" stroke-linecap="round"/></svg>
<div class="t" style="left:99.00px;top:45.02px;font-size:6.6px;color:#cfcfcf;font-weight:normal;letter-spacing:-0.748px;">Drag:</div>
<div class="a" style="left:120.00px;top:42.00px;width:41.00px;height:10.00px;background:rgba(20,20,20,0.45);border-radius:2px;"></div>
<div class="t" style="left:123.50px;top:45.02px;font-size:6.6px;color:#d6d6d6;font-weight:normal;letter-spacing:-0.255px;">Select Box</div>
<svg class="a" style="left:154.80px;top:45.20px" width="5" height="4" viewBox="0 0 5 4"><path d="M1 1.2 L2.5 2.7 L4 1.2" stroke="#bbb" stroke-width="0.9" fill="none" stroke-linecap="round"/></svg>
<div class="t" style="left:35.80px;top:59.65px;font-size:6.5px;color:#ededed;font-weight:normal;text-shadow:0 0 1px #000;-webkit-text-stroke:0.3px #ededed;letter-spacing:-0.205px;">Camera Perspective</div>
<div class="t" style="left:35.80px;top:69.35px;font-size:6.5px;color:#ededed;font-weight:normal;text-shadow:0 0 1px #000;-webkit-text-stroke:0.3px #ededed;letter-spacing:-0.099px;">(0) Collection | Camera.001 &lt;F_00&gt;</div>
<div class="a" style="left:5.80px;top:58.70px;width:19.70px;height:17.10px;background:#272727;border-radius:2.5px;"></div>
<div class="a" style="left:5.80px;top:76.80px;width:19.70px;height:16.90px;background:#272727;border-radius:2.5px;"></div>
<div class="a" style="left:5.80px;top:99.20px;width:19.70px;height:16.60px;background:#272727;border-radius:2.5px;"></div>
<div class="a" style="left:5.80px;top:116.80px;width:19.70px;height:17.70px;background:#272727;border-radius:2.5px;"></div>
<div class="a" style="left:5.80px;top:135.50px;width:19.70px;height:17.80px;background:#272727;border-radius:2.5px;"></div>
<div class="a" style="left:5.80px;top:154.10px;width:19.70px;height:17.90px;background:#4772b3;border-radius:2.5px;"></div>
<div class="a" style="left:5.80px;top:176.20px;width:19.70px;height:17.50px;background:#272727;border-radius:2.5px;"></div>
<div class="a" style="left:5.80px;top:194.70px;width:19.70px;height:17.60px;background:#272727;border-radius:2.5px;"></div>
<div class="a" style="left:5.80px;top:215.90px;width:19.70px;height:18.10px;background:#272727;border-radius:2.5px;"></div>
<svg class="a" style="left:5.8px;top:58px" width="20" height="180" viewBox="5.8 58 20 180"><rect x="10.3" y="61" width="11.5" height="12.5" rx="1.5" fill="none" stroke="#d9a441" stroke-width="1" stroke-dasharray="1.7 0.9"/><path d="M14.1 64.4 L14.1 70.6 L19.4 68.6 Z" fill="#ececec"/><path d="M24.3 74.8 L25 74.1 L25 74.8 Z" fill="#aaa"/><circle cx="16" cy="85.5" r="5.8" fill="none" stroke="#e8e8e8" stroke-width="1.2"/><circle cx="16" cy="85.5" r="5.8" fill="none" stroke="#c23a3a" stroke-width="1.2" stroke-dasharray="1.5 3"/><path d="M16 82.5 V84.5 M16 86.5 V88.5 M13 85.5 H15 M17 85.5 H19" stroke="#777" stroke-width="1"/><path d="M15.8 102.5 V113 M10.5 107.6 H21" stroke="#e0e0e0" stroke-width="0.9"/><path d="M15.8 101.2 L14 103.6 H17.6 Z M15.8 114.2 L14 111.8 H17.6 Z M9.4 107.6 L11.8 105.8 V109.4 Z M22.2 107.6 L19.8 105.8 V109.4 Z" fill="#e8e8e8"/><path d="M11.5 123.5 A4.8 4.8 0 0 1 20.2 123.5 M20.2 127.8 A4.8 4.8 0 0 1 11.5 127.8" stroke="#e0e0e0" stroke-width="0.9" fill="none"/><path d="M10.2 125.6 L12.4 123.6 L12.6 127.6 Z M21.4 125.6 L19.2 123.6 L19 127.6 Z" fill="#e8e8e8"/><circle cx="15.8" cy="125.6" r="1.5" fill="#e0e0e0"/><rect x="11.2" y="140.3" width="9.3" height="9.3" fill="none" stroke="#bdbdbd" stroke-width="0.8"/><rect x="10.8" y="144.6" width="5.4" height="5.4" fill="#f0f0f0"/><path d="M16.5 144.3 L19.3 141.5" stroke="#e0e0e0" stroke-width="0.9"/><path d="M24.3 152.3 L25 151.6 L25 152.3 Z" fill="#aaa"/><circle cx="15.8" cy="163.1" r="5.2" fill="none" stroke="#f4f4f4" stroke-width="0.8" stroke-dasharray="2.2 0.9"/><rect x="13.9" y="161.2" width="3.8" height="3.8" fill="#fff"/><path d="M10.3 188.6 L17.6 180.4 L19 181.6 L11.7 189.8 Z" fill="#e8e8e8"/><path d="M11.5 190.4 Q14 192 16 189.5 Q18.5 186.5 21 189" stroke="#5ec99a" stroke-width="0.9" fill="none"/><path d="M12 197.5 V209.6 H22" stroke="#e6e6e6" stroke-width="1.2" fill="none"/><path d="M13.2 208.6 V201.8 A6.8 6.8 0 0 1 20 208.6 Z" fill="#5ec99a"/><path d="M12.5 222.5 L14.5 220.5 H21.6 V229.8 L19.6 231.8 H12.5 Z M12.5 222.5 H19.6 V231.8 M19.6 222.5 L21.6 220.5" stroke="#7fd4a8" stroke-width="0.8" fill="none"/><path d="M10.8 216.8 L11.6 218.5 L13.3 219.3 L11.6 220.1 L10.8 221.8 L10 220.1 L8.3 219.3 L10 218.5 Z" fill="#7fd4a8"/><path d="M24.3 233 L25 232.3 L25 233 Z" fill="#aaa"/></svg>
<svg class="a" style="left:790px;top:55px" width="50" height="50" viewBox="790 55 50 50"><path d="M814.5 81 L814 64" stroke="#4d8fe0" stroke-width="1.2"/><path d="M814.5 81 L830.7 81" stroke="#e0435f" stroke-width="1.2"/><circle cx="796" cy="81" r="3.8" fill="#7a3040" stroke="#d8435a" stroke-width="1"/><circle cx="813.6" cy="97.6" r="3.8" fill="#2d5486" stroke="#3f80d4" stroke-width="1"/><circle cx="814.5" cy="81" r="4.4" fill="#56703a" stroke="#8ccf2c" stroke-width="1.4"/><circle cx="814" cy="64" r="4" fill="#3f86d8"/><circle cx="830.7" cy="81" r="4" fill="#e8435c"/><text x="814" y="66" font-size="5.5" font-family="Liberation Sans" font-weight="bold" fill="#111" text-anchor="middle">Z</text><text x="830.7" y="83" font-size="5.5" font-family="Liberation Sans" font-weight="bold" fill="#111" text-anchor="middle">X</text></svg>
<div class="a" style="left:822.20px;top:106.20px;width:12.4px;height:12.4px;border-radius:50%;background:rgba(25,25,25,0.6)"></div>
<div class="a" style="left:822.20px;top:122.40px;width:12.4px;height:12.4px;border-radius:50%;background:rgba(25,25,25,0.6)"></div>
<div class="a" style="left:822.20px;top:138.50px;width:12.4px;height:12.4px;border-radius:50%;background:rgba(25,25,25,0.6)"></div>
<div class="a" style="left:822.20px;top:154.80px;width:12.4px;height:12.4px;border-radius:50%;background:rgba(25,25,25,0.6)"></div>
<svg class="a" style="left:822px;top:106px" width="13" height="62" viewBox="0 0 13 62"><circle cx="5.6" cy="5.6" r="2.8" fill="none" stroke="#eee" stroke-width="1"/><path d="M7.6 7.6 L10 10" stroke="#eee" stroke-width="1.2"/><path d="M4.3 5.6 H6.9 M5.6 4.3 V6.9" stroke="#eee" stroke-width="0.6"/><path d="M4 27 V20 M5.7 26 V18.8 M7.4 26 V19.2 M9 26 V20.5 M3 24 L4.5 26.8 Q6 29 8 28.5 Q9.3 28 9.3 25.5" stroke="#eee" stroke-width="1" fill="none"/><circle cx="4.3" cy="36.4" r="1.8" fill="#eee"/><circle cx="7.8" cy="36.2" r="1.7" fill="#eee"/><rect x="3" y="38.2" width="6" height="3.4" fill="#eee"/><path d="M9 38.8 L11 38 V41.8 L9 41" fill="#eee"/><rect x="3.2" y="54" width="6.4" height="4.8" rx="0.5" fill="none" stroke="#eee" stroke-width="0.9"/><path d="M4.5 54 V51.5 Q4.5 49.5 6.5 49.5 Q8.3 49.5 8.5 51" stroke="#eee" stroke-width="0.9" fill="none"/><path d="M6.4 55.6 V57" stroke="#eee" stroke-width="0.8"/></svg>
<svg class="a" style="left:835px;top:67px" width="5" height="6" viewBox="0 0 5 6"><path d="M3.5 0.8 L1.3 3 L3.5 5.2" stroke="#aaa" stroke-width="0.8" fill="none"/></svg>
<div class="a" style="left:1px;top:293px;width:840px;height:246px;border-radius:4px;overflow:hidden;background:#1e1e1e"></div>
<div class="a" style="left:1.00px;top:293.00px;width:840.00px;height:13.30px;background:#2d2d2d;border-radius:0px;border-radius:4px 4px 0 0"></div>
<div class="a" style="left:6.00px;top:295.00px;width:16.00px;height:9.60px;background:#222;border-radius:2px;"></div>
<svg class="a" style="left:8px;top:296px" width="12" height="8" viewBox="0 0 12 8"><circle cx="4" cy="4" r="3.3" fill="#e8e8e8"/><path d="M5 1 L3.2 4 L5 7" stroke="#222" stroke-width="0.9" fill="none"/></svg>
<svg class="a" style="left:16.00px;top:297.80px" width="5" height="4" viewBox="0 0 5 4"><path d="M1 1.2 L2.5 2.7 L4 1.2" stroke="#bbb" stroke-width="0.9" fill="none" stroke-linecap="round"/></svg>
<div class="t" style="left:28.60px;top:297.25px;font-size:6.5px;color:#d0d0d0;font-weight:normal;letter-spacing:-0.043px;">View</div>
<div class="t" style="left:50.80px;top:297.25px;font-size:6.5px;color:#d0d0d0;font-weight:normal;letter-spacing:-0.221px;">Marker</div>
<div class="a" style="left:77.70px;top:295.00px;width:37.00px;height:9.60px;background:#222;border-radius:2px;"></div>
<div class="t" style="left:81.00px;top:297.25px;font-size:6.5px;color:#d0d0d0;font-weight:normal;letter-spacing:-0.172px;">Playback</div>
<svg class="a" style="left:108.00px;top:297.80px" width="5" height="4" viewBox="0 0 5 4"><path d="M1 1.2 L2.5 2.7 L4 1.2" stroke="#bbb" stroke-width="0.9" fill="none" stroke-linecap="round"/></svg>
<div class="a" style="left:342.50px;top:295.00px;width:9.90px;height:9.60px;background:#3d3d3d;border-radius:2px;"></div>
<svg class="a" style="left:344px;top:296px" width="7" height="8" viewBox="0 0 7 8"><circle cx="3.5" cy="4" r="2.6" fill="none" stroke="#888" stroke-width="0.9"/></svg>
<div class="a" style="left:352.40px;top:295.00px;width:8.10px;height:9.60px;background:#2a2a2a;border-radius:2px;"></div>
<svg class="a" style="left:354.00px;top:297.80px" width="5" height="4" viewBox="0 0 5 4"><path d="M1 1.2 L2.5 2.7 L4 1.2" stroke="#666" stroke-width="0.9" fill="none" stroke-linecap="round"/></svg>
<div class="a" style="left:366.50px;top:295.00px;width:62.80px;height:9.60px;background:#3d3d3d;border-radius:2px;"></div>
<svg class="a" style="left:367.30px;top:295.3px" width="10" height="9" viewBox="0 0 10 9"><path d="M2.5 2 V7 M7 2 L3.5 4.5 L7 7 Z" fill="#e0e0e0" stroke="#e0e0e0" stroke-width="0.8"/></svg>
<svg class="a" style="left:377.76px;top:295.3px" width="10" height="9" viewBox="0 0 10 9"><path d="M1 4.5 L3 2.5 L5 4.5 L3 6.5 Z M4.5 4.5 L7.5 2 V7 Z" fill="#e0e0e0" stroke="#e0e0e0" stroke-width="0.8"/></svg>
<svg class="a" style="left:388.22px;top:295.3px" width="10" height="9" viewBox="0 0 10 9"><path d="M7 2 L2.5 4.5 L7 7 Z" fill="#e0e0e0" stroke="#e0e0e0" stroke-width="0.8"/></svg>
<svg class="a" style="left:398.68px;top:295.3px" width="10" height="9" viewBox="0 0 10 9"><path d="M3 2 L7.5 4.5 L3 7 Z" fill="#e0e0e0" stroke="#e0e0e0" stroke-width="0.8"/></svg>
<svg class="a" style="left:409.14px;top:295.3px" width="10" height="9" viewBox="0 0 10 9"><path d="M2 2 L5 4.5 L2 7 Z M5 4.5 L7 2.5 L9 4.5 L7 6.5Z" fill="#e0e0e0" stroke="#e0e0e0" stroke-width="0.8"/></svg>
<svg class="a" style="left:419.60px;top:295.3px" width="10" height="9" viewBox="0 0 10 9"><path d="M7.5 2 V7 M2.5 2 L6 4.5 L2.5 7 Z" fill="#e0e0e0" stroke="#e0e0e0" stroke-width="0.8"/></svg>
<div class="a" style="left:433.30px;top:295.00px;width:20.50px;height:9.60px;background:#3d3d3d;border-radius:2px;"></div>
<svg class="a" style="left:435px;top:295.3px" width="18" height="9" viewBox="0 0 18 9"><path d="M7.5 2 L4 4.5 L7.5 7 Z M2.5 2 V7 M10.5 2 L14 4.5 L10.5 7 Z M15.5 2 V7" fill="#d0d0d0" stroke="#d0d0d0" stroke-width="0.8"/></svg>
<div class="a" style="left:453.80px;top:295.00px;width:9.20px;height:9.60px;background:#2a2a2a;border-radius:2px;"></div>
<svg class="a" style="left:455.90px;top:297.80px" width="5" height="4" viewBox="0 0 5 4"><path d="M1 1.2 L2.5 2.7 L4 1.2" stroke="#ccc" stroke-width="0.9" fill="none" stroke-linecap="round"/></svg>
<div class="a" style="left:468.00px;top:295.00px;width:10.00px;height:9.60px;background:#3d3d3d;border-radius:2px;"></div>
<svg class="a" style="left:469px;top:296px" width="8" height="8" viewBox="0 0 8 8"><path d="M1.5 6 V4 Q1.5 1.5 4 1.5 Q6.5 1.5 6.5 4 V6 M3 6 V4.5 Q3 3 4 3 Q5 3 5 4.5 V6 M1 7 H7" stroke="#999" stroke-width="0.8" fill="none"/></svg>
<div class="a" style="left:478.00px;top:295.00px;width:10.00px;height:9.60px;background:#2a2a2a;border-radius:2px;"></div>
<svg class="a" style="left:480.50px;top:297.80px" width="5" height="4" viewBox="0 0 5 4"><path d="M1 1.2 L2.5 2.7 L4 1.2" stroke="#ccc" stroke-width="0.9" fill="none" stroke-linecap="round"/></svg>
<div class="a" style="left:660.50px;top:294.80px;width:39.50px;height:9.90px;background:#3a3a3a;border-radius:2px;"></div>
<div class="t" style="left:680.00px;transform:translateX(-50%);top:297.75px;font-size:6.5px;color:#d6d6d6;font-weight:normal;">0</div>
<div class="a" style="left:703.30px;top:294.80px;width:9.50px;height:9.90px;background:#2e2e2e;border-radius:2px;"></div>
<svg class="a" style="left:704px;top:295.5px" width="8" height="9" viewBox="0 0 8 9"><circle cx="4" cy="5" r="2.8" fill="none" stroke="#ccc" stroke-width="0.8"/><path d="M4 5 V3.2 M3 1 H5" stroke="#ccc" stroke-width="0.8"/></svg>
<div class="a" style="left:713.80px;top:294.80px;width:46.20px;height:9.90px;background:#3a3a3a;border-radius:2px;"></div>
<div class="a" style="left:760.00px;top:294.80px;width:0.80px;height:9.90px;background:#2a2a2a;border-radius:0px;"></div>
<div class="a" style="left:760.80px;top:294.80px;width:45.20px;height:9.90px;background:#3a3a3a;border-radius:2px;"></div>
<div class="t" style="left:721.40px;top:297.75px;font-size:6.5px;color:#d6d6d6;font-weight:normal;letter-spacing:-0.085px;">Start</div>
<div class="t" style="left:752.50px;transform:translateX(-50%);top:297.75px;font-size:6.5px;color:#d6d6d6;font-weight:normal;">1</div>
<div class="t" style="left:769.00px;top:297.75px;font-size:6.5px;color:#d6d6d6;font-weight:normal;letter-spacing:-0.189px;">End</div>
<div class="t" style="left:788.00px;top:297.75px;font-size:6.5px;color:#d6d6d6;font-weight:normal;letter-spacing:0.218px;">120</div>
<div class="a" style="left:815.70px;top:294.80px;width:9.90px;height:9.90px;background:#4772b3;border-radius:2px;"></div>
<svg class="a" style="left:816.5px;top:295.5px" width="9" height="9" viewBox="0 0 9 9"><circle cx="3.7" cy="5" r="2.7" fill="none" stroke="#fff" stroke-width="0.9"/><circle cx="5.5" cy="3.6" r="2.4" fill="#fff"/></svg>
<div class="a" style="left:825.60px;top:294.80px;width:9.40px;height:9.90px;background:#2a2a2a;border-radius:2px;"></div>
<svg class="a" style="left:827.80px;top:297.80px" width="5" height="4" viewBox="0 0 5 4"><path d="M1 1.2 L2.5 2.7 L4 1.2" stroke="#ccc" stroke-width="0.9" fill="none" stroke-linecap="round"/></svg>
<div class="a" style="left:1.00px;top:306.00px;width:840.00px;height:11.60px;background:#1c1c1c;border-radius:0px;"></div>
<div class="a" style="left:1px;top:0;width:840px;height:541px;overflow:hidden;clip-path:inset(0 0 0 0)"><div class="a" style="left:-1px;top:0;width:1024px;height:541px"><div class="a" style="left:-9.99px;top:317.6px;width:17.00px;height:203.4px;background:#1e1e1e;border-left:1px solid #1b1b1b"></div><div class="a" style="left:7.01px;top:317.6px;width:17.00px;height:203.4px;background:#1f1f1f;border-left:1px solid #1b1b1b"></div><div class="a" style="left:24.01px;top:317.6px;width:17.00px;height:203.4px;background:#1e1e1e;border-left:1px solid #1b1b1b"></div><div class="a" style="left:41.01px;top:317.6px;width:17.00px;height:203.4px;background:#1f1f1f;border-left:1px solid #1b1b1b"></div><div class="a" style="left:58.01px;top:317.6px;width:17.00px;height:203.4px;background:#1e1e1e;border-left:1px solid #1b1b1b"></div><div class="a" style="left:75.01px;top:317.6px;width:17.00px;height:203.4px;background:#1f1f1f;border-left:1px solid #1b1b1b"></div><div class="a" style="left:92.01px;top:317.6px;width:17.00px;height:203.4px;background:#1e1e1e;border-left:1px solid #1b1b1b"></div><div class="a" style="left:109.00px;top:317.6px;width:17.00px;height:203.4px;background:#1f1f1f;border-left:1px solid #1b1b1b"></div><div class="a" style="left:126.00px;top:317.6px;width:17.00px;height:203.4px;background:#1e1e1e;border-left:1px solid #1b1b1b"></div><div class="a" style="left:143.00px;top:317.6px;width:17.00px;height:203.4px;background:#1f1f1f;border-left:1px solid #1b1b1b"></div><div class="a" style="left:160.00px;top:317.6px;width:17.00px;height:203.4px;background:#1e1e1e;border-left:1px solid #1b1b1b"></div><div class="a" style="left:177.00px;top:317.6px;width:17.00px;height:203.4px;background:#1f1f1f;border-left:1px solid #1b1b1b"></div><div class="a" style="left:194.00px;top:317.6px;width:17.00px;height:203.4px;background:#1e1e1e;border-left:1px solid #1b1b1b"></div><div class="a" style="left:211.00px;top:317.6px;width:17.00px;height:203.4px;background:#1f1f1f;border-left:1px solid #1b1b1b"></div><div class="a" style="left:228.00px;top:317.6px;width:17.00px;height:203.4px;background:#1e1e1e;border-left:1px solid #1b1b1b"></div><div class="a" style="left:245.00px;top:317.6px;width:17.00px;height:203.4px;background:#1f1f1f;border-left:1px solid #1b1b1b"></div><div class="a" style="left:262.00px;top:317.6px;width:17.00px;height:203.4px;background:#1e1e1e;border-left:1px solid #1b1b1b"></div><div class="a" style="left:279.00px;top:317.6px;width:17.00px;height:203.4px;background:#2e2e2e;border-left:1px solid #292929"></div><div class="a" style="left:296.00px;top:317.6px;width:17.00px;height:203.4px;background:#2f2f2f;border-left:1px solid #292929"></div><div class="a" style="left:313.00px;top:317.6px;width:17.00px;height:203.4px;background:#2e2e2e;border-left:1px solid #292929"></div><div class="a" style="left:330.00px;top:317.6px;width:17.00px;height:203.4px;background:#2f2f2f;border-left:1px solid #292929"></div><div class="a" style="left:347.00px;top:317.6px;width:17.00px;height:203.4px;background:#2e2e2e;border-left:1px solid #292929"></div><div class="a" style="left:364.00px;top:317.6px;width:17.00px;height:203.4px;background:#2f2f2f;border-left:1px solid #292929"></div><div class="a" style="left:381.00px;top:317.6px;width:17.00px;height:203.4px;background:#2e2e2e;border-left:1px solid #292929"></div><div class="a" style="left:398.00px;top:317.6px;width:17.00px;height:203.4px;background:#2f2f2f;border-left:1px solid #292929"></div><div class="a" style="left:415.00px;top:317.6px;width:17.00px;height:203.4px;background:#1f1f1f;border-left:1px solid #1b1b1b"></div><div class="a" style="left:432.00px;top:317.6px;width:17.00px;height:203.4px;background:#1e1e1e;border-left:1px solid #1b1b1b"></div><div class="a" style="left:449.00px;top:317.6px;width:17.00px;height:203.4px;background:#1f1f1f;border-left:1px solid #1b1b1b"></div><div class="a" style="left:465.99px;top:317.6px;width:17.00px;height:203.4px;background:#1e1e1e;border-left:1px solid #1b1b1b"></div><div class="a" style="left:482.99px;top:317.6px;width:17.00px;height:203.4px;background:#1f1f1f;border-left:1px solid #1b1b1b"></div><div class="a" style="left:499.99px;top:317.6px;width:17.00px;height:203.4px;background:#1e1e1e;border-left:1px solid #1b1b1b"></div><div class="a" style="left:516.99px;top:317.6px;width:17.00px;height:203.4px;background:#1f1f1f;border-left:1px solid #1b1b1b"></div><div class="a" style="left:533.99px;top:317.6px;width:17.00px;height:203.4px;background:#1e1e1e;border-left:1px solid #1b1b1b"></div><div class="a" style="left:550.99px;top:317.6px;width:17.00px;height:203.4px;background:#1f1f1f;border-left:1px solid #1b1b1b"></div><div class="a" style="left:567.99px;top:317.6px;width:17.00px;height:203.4px;background:#1e1e1e;border-left:1px solid #1b1b1b"></div><div class="a" style="left:584.99px;top:317.6px;width:17.00px;height:203.4px;background:#1f1f1f;border-left:1px solid #1b1b1b"></div><div class="a" style="left:601.99px;top:317.6px;width:17.00px;height:203.4px;background:#1e1e1e;border-left:1px solid #1b1b1b"></div><div class="a" style="left:618.99px;top:317.6px;width:17.00px;height:203.4px;background:#1f1f1f;border-left:1px solid #1b1b1b"></div><div class="a" style="left:635.99px;top:317.6px;width:17.00px;height:203.4px;background:#1e1e1e;border-left:1px solid #1b1b1b"></div><div class="a" style="left:652.99px;top:317.6px;width:17.00px;height:203.4px;background:#1f1f1f;border-left:1px solid #1b1b1b"></div><div class="a" style="left:669.99px;top:317.6px;width:17.00px;height:203.4px;background:#1e1e1e;border-left:1px solid #1b1b1b"></div><div class="a" style="left:686.99px;top:317.6px;width:17.00px;height:203.4px;background:#1f1f1f;border-left:1px solid #1b1b1b"></div><div class="a" style="left:703.99px;top:317.6px;width:17.00px;height:203.4px;background:#1e1e1e;border-left:1px solid #1b1b1b"></div><div class="a" style="left:720.99px;top:317.6px;width:17.00px;height:203.4px;background:#1f1f1f;border-left:1px solid #1b1b1b"></div><div class="a" style="left:737.99px;top:317.6px;width:17.00px;height:203.4px;background:#1e1e1e;border-left:1px solid #1b1b1b"></div><div class="a" style="left:754.99px;top:317.6px;width:17.00px;height:203.4px;background:#1f1f1f;border-left:1px solid #1b1b1b"></div><div class="a" style="left:771.99px;top:317.6px;width:17.00px;height:203.4px;background:#1e1e1e;border-left:1px solid #1b1b1b"></div><div class="a" style="left:788.99px;top:317.6px;width:17.00px;height:203.4px;background:#1f1f1f;border-left:1px solid #1b1b1b"></div><div class="a" style="left:805.98px;top:317.6px;width:17.00px;height:203.4px;background:#1e1e1e;border-left:1px solid #1b1b1b"></div><div class="a" style="left:822.98px;top:317.6px;width:17.00px;height:203.4px;background:#1f1f1f;border-left:1px solid #1b1b1b"></div><div class="a" style="left:839.98px;top:317.6px;width:17.00px;height:203.4px;background:#1e1e1e;border-left:1px solid #1b1b1b"></div></div></div>
<div class="t" style="left:7.01px;transform:translateX(-50%);top:310.71px;font-size:6.3px;color:#9c9c9c;font-weight:normal;">-240</div>
<div class="t" style="left:41.01px;transform:translateX(-50%);top:310.71px;font-size:6.3px;color:#9c9c9c;font-weight:normal;">-210</div>
<div class="t" style="left:75.01px;transform:translateX(-50%);top:310.71px;font-size:6.3px;color:#9c9c9c;font-weight:normal;">-180</div>
<div class="t" style="left:109.00px;transform:translateX(-50%);top:310.71px;font-size:6.3px;color:#9c9c9c;font-weight:normal;">-150</div>
<div class="t" style="left:143.00px;transform:translateX(-50%);top:310.71px;font-size:6.3px;color:#9c9c9c;font-weight:normal;">-120</div>
<div class="t" style="left:177.00px;transform:translateX(-50%);top:310.71px;font-size:6.3px;color:#9c9c9c;font-weight:normal;">-90</div>
<div class="t" style="left:211.00px;transform:translateX(-50%);top:310.71px;font-size:6.3px;color:#9c9c9c;font-weight:normal;">-60</div>
<div class="t" style="left:245.00px;transform:translateX(-50%);top:310.71px;font-size:6.3px;color:#9c9c9c;font-weight:normal;">-30</div>
<div class="t" style="left:313.00px;transform:translateX(-50%);top:310.71px;font-size:6.3px;color:#9c9c9c;font-weight:normal;">30</div>
<div class="t" style="left:347.00px;transform:translateX(-50%);top:310.71px;font-size:6.3px;color:#9c9c9c;font-weight:normal;">60</div>
<div class="t" style="left:381.00px;transform:translateX(-50%);top:310.71px;font-size:6.3px;color:#9c9c9c;font-weight:normal;">90</div>
<div class="t" style="left:415.00px;transform:translateX(-50%);top:310.71px;font-size:6.3px;color:#9c9c9c;font-weight:normal;">120</div>
<div class="t" style="left:449.00px;transform:translateX(-50%);top:310.71px;font-size:6.3px;color:#9c9c9c;font-weight:normal;">150</div>
<div class="t" style="left:482.99px;transform:translateX(-50%);top:310.71px;font-size:6.3px;color:#9c9c9c;font-weight:normal;">180</div>
<div class="t" style="left:516.99px;transform:translateX(-50%);top:310.71px;font-size:6.3px;color:#9c9c9c;font-weight:normal;">210</div>
<div class="t" style="left:550.99px;transform:translateX(-50%);top:310.71px;font-size:6.3px;color:#9c9c9c;font-weight:normal;">240</div>
<div class="t" style="left:584.99px;transform:translateX(-50%);top:310.71px;font-size:6.3px;color:#9c9c9c;font-weight:normal;">270</div>
<div class="t" style="left:618.99px;transform:translateX(-50%);top:310.71px;font-size:6.3px;color:#9c9c9c;font-weight:normal;">300</div>
<div class="t" style="left:652.99px;transform:translateX(-50%);top:310.71px;font-size:6.3px;color:#9c9c9c;font-weight:normal;">330</div>
<div class="t" style="left:686.99px;transform:translateX(-50%);top:310.71px;font-size:6.3px;color:#9c9c9c;font-weight:normal;">360</div>
<div class="t" style="left:720.99px;transform:translateX(-50%);top:310.71px;font-size:6.3px;color:#9c9c9c;font-weight:normal;">390</div>
<div class="t" style="left:754.99px;transform:translateX(-50%);top:310.71px;font-size:6.3px;color:#9c9c9c;font-weight:normal;">420</div>
<div class="t" style="left:788.99px;transform:translateX(-50%);top:310.71px;font-size:6.3px;color:#9c9c9c;font-weight:normal;">450</div>
<div class="t" style="left:822.98px;transform:translateX(-50%);top:310.71px;font-size:6.3px;color:#9c9c9c;font-weight:normal;">480</div>
<svg class="a" style="left:2px;top:320.5px" width="5" height="6" viewBox="0 0 5 6"><path d="M1.2 1 L3.4 3 L1.2 5" stroke="#888" stroke-width="0.8" fill="none"/></svg>
<div class="a" style="left:1.00px;top:521.00px;width:840.00px;height:14.50px;background:#1b1b1b;border-radius:0px;"></div>
<div class="a" style="left:5.00px;top:536.00px;width:831.00px;height:1.20px;background:#2e2e2e;border-radius:1px;"></div>
<div class="a" style="left:298px;top:318px;width:2px;height:203px;background:repeating-linear-gradient(#a8a8a8 0 1.8px,transparent 1.8px 3.2px)"></div>
<div class="a" style="left:277.80px;top:307.50px;width:2.10px;height:230.50px;background:#4772b3;border-radius:0px;"></div>
<div class="a" style="left:273.00px;top:307.50px;width:11.80px;height:10.10px;background:#4772b3;border-radius:2px;"></div>
<div class="t" style="left:279.20px;transform:translateX(-50%);top:310.80px;font-size:6px;color:#fff;font-weight:normal;">0</div>
<svg class="a" style="left:273px;top:521px" width="10" height="10" viewBox="0 0 10 10" opacity="0.45"><circle cx="3.2" cy="4" r="2.2" fill="none" stroke="#bbb" stroke-width="0.8"/><circle cx="6.6" cy="3.6" r="2" fill="none" stroke="#bbb" stroke-width="0.8"/><rect x="2.5" y="6" width="5" height="2.5" fill="#bbb"/></svg>
<div class="t" style="left:283.60px;top:523.55px;font-size:6.5px;color:#7a7a7a;font-weight:normal;">Ca</div>
<svg class="a" style="left:293.5px;top:521px" width="10" height="11" viewBox="0 0 10 11"><circle cx="3.2" cy="4.3" r="2.4" fill="#eee"/><circle cx="6.4" cy="3.8" r="2.3" fill="#eee"/><rect x="2.3" y="6.2" width="5.4" height="3" fill="#eee"/><circle cx="3.2" cy="4.3" r="0.9" fill="#333"/></svg>
<div class="t" style="left:303.90px;top:523.55px;font-size:6.5px;color:#e6e6e6;font-weight:normal;letter-spacing:-0.287px;">Camera</div>
<div class="a" style="left:843px;top:26px;width:185px;height:467.5px;border-radius:4px;overflow:hidden;background:#282828"></div>
<div class="a" style="left:843.00px;top:26.00px;width:181.00px;height:12.50px;background:#2b2b2b;border-radius:0px;border-radius:4px 0 0 0"></div>
<div class="a" style="left:847.70px;top:27.60px;width:16.30px;height:10.00px;background:#242424;border-radius:2px;"></div>
<svg class="a" style="left:849px;top:28.5px" width="10" height="9" viewBox="0 0 10 9"><rect x="1" y="0.8" width="3" height="2" fill="#ddd"/><path d="M2.5 3 V8 H5" stroke="#ddd" stroke-width="0.8" fill="none"/><rect x="4.5" y="4" width="5" height="1.8" fill="#ddd"/><rect x="4.5" y="6.8" width="5" height="1.8" fill="#ddd"/></svg>
<svg class="a" style="left:858.50px;top:30.60px" width="5" height="4" viewBox="0 0 5 4"><path d="M1 1.2 L2.5 2.7 L4 1.2" stroke="#bbb" stroke-width="0.9" fill="none" stroke-linecap="round"/></svg>
<div class="a" style="left:867.60px;top:27.60px;width:16.40px;height:10.00px;background:#242424;border-radius:2px;"></div>
<svg class="a" style="left:869.5px;top:28.5px" width="9" height="9" viewBox="0 0 9 9"><path d="M1 7 L2 3 L5 1.5 L8 3 L7.5 6.5 L4 8 Z" fill="#aaa"/><path d="M4 4 L8 3 L7.5 6.5 Z" fill="#ddd"/></svg>
<svg class="a" style="left:878.00px;top:30.60px" width="5" height="4" viewBox="0 0 5 4"><path d="M1 1.2 L2.5 2.7 L4 1.2" stroke="#bbb" stroke-width="0.9" fill="none" stroke-linecap="round"/></svg>
<div class="a" style="left:895.70px;top:28.00px;width:62.30px;height:9.50px;background:#1e1e1e;border-radius:2.5px;"></div>
<svg class="a" style="left:898px;top:29px" width="9" height="8" viewBox="0 0 9 8"><circle cx="3.5" cy="3.3" r="2.3" fill="none" stroke="#ccc" stroke-width="0.9"/><path d="M5.2 5 L7.8 7.5" stroke="#ccc" stroke-width="1"/></svg>
<div class="t" style="left:909.00px;top:30.91px;font-size:6.3px;color:#5f5f5f;font-weight:normal;letter-spacing:-0.094px;">Search</div>
<svg class="a" style="left:990px;top:28.5px" width="16" height="9" viewBox="0 0 16 9"><path d="M1 1 H9 L6 4.5 V8 L4 7 V4.5 Z" fill="none" stroke="#ccc" stroke-width="0.8"/><path d="M11.5 3.5 L13 5 L14.5 3.5" stroke="#bbb" stroke-width="0.8" fill="none"/></svg>
<div class="a" style="left:1008.00px;top:27.80px;width:11.50px;height:9.80px;background:#3d3d3d;border-radius:2px;"></div>
<svg class="a" style="left:1009.5px;top:29px" width="9" height="8" viewBox="0 0 9 8"><rect x="0.8" y="1.5" width="5.5" height="5.5" fill="none" stroke="#999" stroke-width="0.8"/><path d="M6.5 0.5 V3.5 M5 2 H8" stroke="#ddd" stroke-width="0.9"/></svg>
<div class="a" style="left:843.00px;top:51.85px;width:181.00px;height:10.65px;background:#2b2b2b;border-radius:0px;"></div>
<div class="a" style="left:843.00px;top:73.15px;width:181.00px;height:10.65px;background:#2b2b2b;border-radius:0px;"></div>
<div class="a" style="left:843.00px;top:94.45px;width:181.00px;height:10.65px;background:#2b2b2b;border-radius:0px;"></div>
<div class="a" style="left:843.00px;top:115.75px;width:181.00px;height:10.65px;background:#2b2b2b;border-radius:0px;"></div>
<div class="a" style="left:843.00px;top:137.05px;width:181.00px;height:10.65px;background:#2b2b2b;border-radius:0px;"></div>
<div class="a" style="left:843.00px;top:158.35px;width:181.00px;height:10.65px;background:#2b2b2b;border-radius:0px;"></div>
<div class="a" style="left:843.00px;top:179.65px;width:181.00px;height:10.65px;background:#2b2b2b;border-radius:0px;"></div>
<div class="a" style="left:843.00px;top:200.95px;width:181.00px;height:10.65px;background:#2b2b2b;border-radius:0px;"></div>
<div class="a" style="left:843.00px;top:222.25px;width:181.00px;height:10.65px;background:#2b2b2b;border-radius:0px;"></div>
<div class="a" style="left:843.00px;top:243.55px;width:181.00px;height:10.65px;background:#2b2b2b;border-radius:0px;"></div>
<div class="a" style="left:843.00px;top:264.85px;width:181.00px;height:10.65px;background:#2b2b2b;border-radius:0px;"></div>
<div class="a" style="left:843.00px;top:286.15px;width:181.00px;height:10.65px;background:#2b2b2b;border-radius:0px;"></div>
<div class="a" style="left:843.00px;top:307.45px;width:181.00px;height:10.65px;background:#2b2b2b;border-radius:0px;"></div>
<div class="a" style="left:843.00px;top:328.75px;width:181.00px;height:10.65px;background:#2b2b2b;border-radius:0px;"></div>
<div class="a" style="left:843.00px;top:350.05px;width:181.00px;height:10.65px;background:#2b2b2b;border-radius:0px;"></div>
<div class="a" style="left:843.00px;top:371.35px;width:181.00px;height:10.65px;background:#2b2b2b;border-radius:0px;"></div>
<div class="a" style="left:843.00px;top:392.65px;width:181.00px;height:10.65px;background:#2b2b2b;border-radius:0px;"></div>
<div class="a" style="left:843.00px;top:413.95px;width:181.00px;height:10.65px;background:#2b2b2b;border-radius:0px;"></div>
<div class="a" style="left:843.00px;top:435.25px;width:181.00px;height:10.65px;background:#2b2b2b;border-radius:0px;"></div>
<div class="a" style="left:843.00px;top:456.55px;width:181.00px;height:10.65px;background:#2b2b2b;border-radius:0px;"></div>
<div class="a" style="left:843.00px;top:477.85px;width:181.00px;height:10.65px;background:#2b2b2b;border-radius:0px;"></div>
<div class="a" style="left:845.00px;top:73.00px;width:175.50px;height:10.30px;background:#334d80;border-radius:2px;"></div>
<svg class="a" style="left:854.70px;top:42.50px" width="8" height="8" viewBox="0 0 8 8"><rect x="0.5" y="0.8" width="7" height="2" fill="#e0e0e0"/><rect x="1" y="3.3" width="6" height="4.2" fill="#e0e0e0"/><rect x="2.5" y="4.2" width="3" height="0.9" fill="#333"/></svg>
<div class="t" style="left:867.00px;top:44.68px;font-size:6.4px;color:#cfcfcf;font-weight:normal;letter-spacing:-0.064px;">Scene Collection</div>
<svg class="a" style="left:856.5px;top:54.5px" width="5" height="5" viewBox="0 0 5 5"><path d="M0.6 1.2 L2.5 3.3 L4.4 1.2" stroke="#999" stroke-width="0.8" fill="none"/></svg>
<div class="a" style="left:864.00px;top:52.00px;width:10.80px;height:10.30px;background:#3a3a3a;border-radius:2px;"></div>
<svg class="a" style="left:865.40px;top:53.10px" width="8" height="8" viewBox="0 0 8 8"><rect x="0.5" y="0.8" width="7" height="2" fill="#e0e0e0"/><rect x="1" y="3.3" width="6" height="4.2" fill="#e0e0e0"/><rect x="2.5" y="4.2" width="3" height="0.9" fill="#333"/></svg>
<div class="t" style="left:877.00px;top:55.25px;font-size:6.5px;color:#ededed;font-weight:bold;letter-spacing:-0.242px;">Collection</div>
<svg class="a" style="left:987.80px;top:53.70px" width="7" height="7" viewBox="0 0 7 7"><rect x="0.3" y="0.3" width="6.4" height="6.4" rx="1" fill="#ececec"/><path d="M1.5 3.6 L3 5 L5.6 1.8" stroke="#222" stroke-width="0.9" fill="none"/></svg>
<svg class="a" style="left:998.00px;top:54.20px" width="8" height="6" viewBox="0 0 8 6"><path d="M0.5 3 Q4 -0.8 7.5 3 Q4 6.8 0.5 3 Z" stroke="#dcdcdc" stroke-width="0.8" fill="none"/><circle cx="4" cy="3" r="1.2" fill="#dcdcdc"/></svg>
<svg class="a" style="left:1008.60px;top:53.20px" width="8" height="8" viewBox="0 0 8 8"><rect x="0.6" y="1.8" width="6.8" height="5.4" rx="0.6" fill="#dcdcdc"/><rect x="2.5" y="0.8" width="3" height="1.4" fill="#dcdcdc"/><circle cx="4" cy="4.5" r="1.6" fill="#2a2a2a"/><circle cx="4" cy="4.5" r="0.8" fill="#dcdcdc"/></svg>
<div class="a" style="left:858.30px;top:63.00px;width:0.80px;height:73.00px;background:#4a4a4a;border-radius:0px;"></div>
<svg class="a" style="left:867.50px;top:64.60px" width="5" height="6" viewBox="0 0 5 6"><path d="M1.3 0.8 L3.6 3 L1.3 5.2" stroke="#8a8a8a" stroke-width="0.8" fill="none"/></svg>
<svg class="a" style="left:874.60px;top:63.10px" width="10" height="9" viewBox="0 0 10 9"><circle cx="3" cy="2.8" r="2" fill="#e08a3c"/><circle cx="6.3" cy="2.6" r="1.8" fill="#e08a3c"/><rect x="1.5" y="4.5" width="6" height="3.5" fill="#e08a3c"/><path d="M7.5 5.2 L9.5 4.2 V8 L7.5 7 Z" fill="#e08a3c"/></svg>
<div class="t" style="left:887.60px;top:65.78px;font-size:6.4px;color:#cfcfcf;font-weight:normal;letter-spacing:-0.227px;">Camera</div>
<svg class="a" style="left:920.00px;top:63.10px" width="10" height="9" viewBox="0 0 10 9"><circle cx="3.3" cy="2.8" r="1.8" fill="none" stroke="#36b083" stroke-width="0.9"/><circle cx="6.4" cy="2.8" r="1.6" fill="none" stroke="#36b083" stroke-width="0.9"/><rect x="1.5" y="4.8" width="6" height="3" fill="none" stroke="#36b083" stroke-width="0.9"/><path d="M7.8 5.5 L9.5 4.8 V8 L7.8 7.2" stroke="#36b083" stroke-width="0.8" fill="none"/></svg>
<svg class="a" style="left:998.00px;top:64.60px" width="8" height="6" viewBox="0 0 8 6"><path d="M0.5 3 Q4 -0.8 7.5 3 Q4 6.8 0.5 3 Z" stroke="#dcdcdc" stroke-width="0.8" fill="none"/><circle cx="4" cy="3" r="1.2" fill="#dcdcdc"/></svg>
<svg class="a" style="left:1008.60px;top:63.60px" width="8" height="8" viewBox="0 0 8 8"><rect x="0.6" y="1.8" width="6.8" height="5.4" rx="0.6" fill="#dcdcdc"/><rect x="2.5" y="0.8" width="3" height="1.4" fill="#dcdcdc"/><circle cx="4" cy="4.5" r="1.6" fill="#2a2a2a"/><circle cx="4" cy="4.5" r="0.8" fill="#dcdcdc"/></svg>
<svg class="a" style="left:867.50px;top:75.20px" width="5" height="6" viewBox="0 0 5 6"><path d="M1.3 0.8 L3.6 3 L1.3 5.2" stroke="#aab" stroke-width="0.8" fill="none"/></svg>
<div class="a" style="left:874.50px;top:73.80px;width:10.50px;height:8.80px;background:#4a6699;border-radius:2px;"></div>
<svg class="a" style="left:874.60px;top:73.70px" width="10" height="9" viewBox="0 0 10 9"><circle cx="3" cy="2.8" r="2" fill="#e08a3c"/><circle cx="6.3" cy="2.6" r="1.8" fill="#e08a3c"/><rect x="1.5" y="4.5" width="6" height="3.5" fill="#e08a3c"/><path d="M7.5 5.2 L9.5 4.2 V8 L7.5 7 Z" fill="#e08a3c"/></svg>
<div class="t" style="left:887.60px;top:76.38px;font-size:6.4px;color:#f0a050;font-weight:normal;letter-spacing:-0.112px;">Camera.001</div>
<div class="a" style="left:932.50px;top:73.80px;width:11.00px;height:8.80px;background:#4f6a9a;border-radius:2px;"></div>
<svg class="a" style="left:933.00px;top:73.70px" width="10" height="9" viewBox="0 0 10 9"><circle cx="3.3" cy="2.8" r="1.8" fill="none" stroke="#46c0a0" stroke-width="0.9"/><circle cx="6.4" cy="2.8" r="1.6" fill="none" stroke="#46c0a0" stroke-width="0.9"/><rect x="1.5" y="4.8" width="6" height="3" fill="none" stroke="#46c0a0" stroke-width="0.9"/><path d="M7.8 5.5 L9.5 4.8 V8 L7.8 7.2" stroke="#46c0a0" stroke-width="0.8" fill="none"/></svg>
<svg class="a" style="left:998.00px;top:75.20px" width="8" height="6" viewBox="0 0 8 6"><path d="M0.5 3 Q4 -0.8 7.5 3 Q4 6.8 0.5 3 Z" stroke="#dcdcdc" stroke-width="0.8" fill="none"/><circle cx="4" cy="3" r="1.2" fill="#dcdcdc"/></svg>
<svg class="a" style="left:1008.60px;top:74.20px" width="8" height="8" viewBox="0 0 8 8"><rect x="0.6" y="1.8" width="6.8" height="5.4" rx="0.6" fill="#dcdcdc"/><rect x="2.5" y="0.8" width="3" height="1.4" fill="#dcdcdc"/><circle cx="4" cy="4.5" r="1.6" fill="#2a2a2a"/><circle cx="4" cy="4.5" r="0.8" fill="#dcdcdc"/></svg>
<svg class="a" style="left:867.50px;top:85.90px" width="5" height="6" viewBox="0 0 5 6"><path d="M1.3 0.8 L3.6 3 L1.3 5.2" stroke="#6e6e6e" stroke-width="0.8" fill="none"/></svg>
<svg class="a" style="left:875.10px;top:84.40px" width="9" height="9" viewBox="0 0 9 9"><circle cx="4.5" cy="1.6" r="1.2" fill="#c77a38"/><path d="M1 3 L4.5 4 L8 3 M4.5 4 V5.5 L2 8.5 M4.5 5.5 L7 8.5" stroke="#c77a38" stroke-width="1.1" fill="none"/></svg>
<div class="t" style="left:887.60px;top:87.08px;font-size:6.4px;color:#8a8a8a;font-weight:normal;letter-spacing:0.002px;">Secundario</div>
<svg class="a" style="left:932.00px;top:84.40px" width="8" height="9" viewBox="0 0 8 9"><path d="M1 1.2 H5 L2.2 5.6 H7 M5.8 4.4 L7.2 5.6 L5.8 6.8" stroke="#8a8a8a" stroke-width="0.8" fill="none"/></svg>
<svg class="a" style="left:942.50px;top:84.40px" width="9" height="9" viewBox="0 0 9 9"><path d="M1 2 L3.5 4 L6.5 4 L8 2 M3.5 4 L2 8.5 M6 4 L7 8.5 M5 1 V3" stroke="#2f9a72" stroke-width="0.9" fill="none"/></svg>
<svg class="a" style="left:952.50px;top:84.40px" width="9" height="9" viewBox="0 0 9 9"><path d="M1 2 L3.5 4 L6.5 4 L8 2 M3.5 4 L2 8.5 M6 4 L7 8.5 M5 1 V3" stroke="#2f9a72" stroke-width="0.9" fill="none"/></svg>
<svg class="a" style="left:963.80px;top:84.90px" width="8" height="8" viewBox="0 0 8 8"><path d="M1.2 1.3 H6.8 L4 7 Z" stroke="#b97335" stroke-width="1.3" fill="none" stroke-linejoin="round"/></svg>
<svg class="a" style="left:998.00px;top:85.90px" width="8" height="6" viewBox="0 0 8 6"><path d="M0.8 2 Q4 5.2 7.2 2" stroke="#cfcfcf" stroke-width="0.9" fill="none"/></svg>
<svg class="a" style="left:1008.60px;top:84.90px" width="8" height="8" viewBox="0 0 8 8"><rect x="0.6" y="1.8" width="6.8" height="5.4" rx="0.6" fill="#dcdcdc"/><rect x="2.5" y="0.8" width="3" height="1.4" fill="#dcdcdc"/><circle cx="4" cy="4.5" r="1.6" fill="#2a2a2a"/><circle cx="4" cy="4.5" r="0.8" fill="#dcdcdc"/></svg>
<svg class="a" style="left:867.50px;top:96.58px" width="5" height="6" viewBox="0 0 5 6"><path d="M1.3 0.8 L3.6 3 L1.3 5.2" stroke="#6e6e6e" stroke-width="0.8" fill="none"/></svg>
<svg class="a" style="left:875.10px;top:95.08px" width="9" height="9" viewBox="0 0 9 9"><circle cx="4.5" cy="1.6" r="1.2" fill="#c77a38"/><path d="M1 3 L4.5 4 L8 3 M4.5 4 V5.5 L2 8.5 M4.5 5.5 L7 8.5" stroke="#c77a38" stroke-width="1.1" fill="none"/></svg>
<div class="t" style="left:887.60px;top:97.76px;font-size:6.4px;color:#8a8a8a;font-weight:normal;letter-spacing:0.005px;">Secundario.001</div>
<svg class="a" style="left:944.60px;top:95.08px" width="8" height="9" viewBox="0 0 8 9"><path d="M1 1.2 H5 L2.2 5.6 H7 M5.8 4.4 L7.2 5.6 L5.8 6.8" stroke="#8a8a8a" stroke-width="0.8" fill="none"/></svg>
<svg class="a" style="left:954.50px;top:95.08px" width="9" height="9" viewBox="0 0 9 9"><path d="M1 2 L3.5 4 L6.5 4 L8 2 M3.5 4 L2 8.5 M6 4 L7 8.5 M5 1 V3" stroke="#2f9a72" stroke-width="0.9" fill="none"/></svg>
<svg class="a" style="left:965.30px;top:95.08px" width="9" height="9" viewBox="0 0 9 9"><path d="M1 2 L3.5 4 L6.5 4 L8 2 M3.5 4 L2 8.5 M6 4 L7 8.5 M5 1 V3" stroke="#2f9a72" stroke-width="0.9" fill="none"/></svg>
<svg class="a" style="left:976.50px;top:95.58px" width="8" height="8" viewBox="0 0 8 8"><path d="M1.2 1.3 H6.8 L4 7 Z" stroke="#b97335" stroke-width="1.3" fill="none" stroke-linejoin="round"/></svg>
<svg class="a" style="left:998.00px;top:96.58px" width="8" height="6" viewBox="0 0 8 6"><path d="M0.8 2 Q4 5.2 7.2 2" stroke="#cfcfcf" stroke-width="0.9" fill="none"/></svg>
<svg class="a" style="left:1008.60px;top:95.58px" width="8" height="8" viewBox="0 0 8 8"><rect x="0.6" y="1.8" width="6.8" height="5.4" rx="0.6" fill="#dcdcdc"/><rect x="2.5" y="0.8" width="3" height="1.4" fill="#dcdcdc"/><circle cx="4" cy="4.5" r="1.6" fill="#2a2a2a"/><circle cx="4" cy="4.5" r="0.8" fill="#dcdcdc"/></svg>
<svg class="a" style="left:867.50px;top:107.26px" width="5" height="6" viewBox="0 0 5 6"><path d="M1.3 0.8 L3.6 3 L1.3 5.2" stroke="#6e6e6e" stroke-width="0.8" fill="none"/></svg>
<svg class="a" style="left:875.10px;top:105.76px" width="9" height="9" viewBox="0 0 9 9"><circle cx="4.5" cy="1.6" r="1.2" fill="#c77a38"/><path d="M1 3 L4.5 4 L8 3 M4.5 4 V5.5 L2 8.5 M4.5 5.5 L7 8.5" stroke="#c77a38" stroke-width="1.1" fill="none"/></svg>
<div class="t" style="left:887.60px;top:108.44px;font-size:6.4px;color:#8a8a8a;font-weight:normal;letter-spacing:0.005px;">Secundario.002</div>
<svg class="a" style="left:944.60px;top:105.76px" width="8" height="9" viewBox="0 0 8 9"><path d="M1 1.2 H5 L2.2 5.6 H7 M5.8 4.4 L7.2 5.6 L5.8 6.8" stroke="#8a8a8a" stroke-width="0.8" fill="none"/></svg>
<svg class="a" style="left:954.50px;top:105.76px" width="9" height="9" viewBox="0 0 9 9"><path d="M1 2 L3.5 4 L6.5 4 L8 2 M3.5 4 L2 8.5 M6 4 L7 8.5 M5 1 V3" stroke="#2f9a72" stroke-width="0.9" fill="none"/></svg>
<svg class="a" style="left:965.30px;top:105.76px" width="9" height="9" viewBox="0 0 9 9"><path d="M1 2 L3.5 4 L6.5 4 L8 2 M3.5 4 L2 8.5 M6 4 L7 8.5 M5 1 V3" stroke="#2f9a72" stroke-width="0.9" fill="none"/></svg>
<svg class="a" style="left:976.50px;top:106.26px" width="8" height="8" viewBox="0 0 8 8"><path d="M1.2 1.3 H6.8 L4 7 Z" stroke="#b97335" stroke-width="1.3" fill="none" stroke-linejoin="round"/></svg>
<svg class="a" style="left:998.00px;top:107.26px" width="8" height="6" viewBox="0 0 8 6"><path d="M0.8 2 Q4 5.2 7.2 2" stroke="#cfcfcf" stroke-width="0.9" fill="none"/></svg>
<svg class="a" style="left:1008.60px;top:106.26px" width="8" height="8" viewBox="0 0 8 8"><rect x="0.6" y="1.8" width="6.8" height="5.4" rx="0.6" fill="#dcdcdc"/><rect x="2.5" y="0.8" width="3" height="1.4" fill="#dcdcdc"/><circle cx="4" cy="4.5" r="1.6" fill="#2a2a2a"/><circle cx="4" cy="4.5" r="0.8" fill="#dcdcdc"/></svg>
<svg class="a" style="left:867.50px;top:117.94px" width="5" height="6" viewBox="0 0 5 6"><path d="M1.3 0.8 L3.6 3 L1.3 5.2" stroke="#6e6e6e" stroke-width="0.8" fill="none"/></svg>
<svg class="a" style="left:875.10px;top:116.44px" width="9" height="9" viewBox="0 0 9 9"><circle cx="4.5" cy="1.6" r="1.2" fill="#c77a38"/><path d="M1 3 L4.5 4 L8 3 M4.5 4 V5.5 L2 8.5 M4.5 5.5 L7 8.5" stroke="#c77a38" stroke-width="1.1" fill="none"/></svg>
<div class="t" style="left:887.60px;top:119.12px;font-size:6.4px;color:#8a8a8a;font-weight:normal;letter-spacing:0.005px;">Secundario.003</div>
<svg class="a" style="left:944.60px;top:116.44px" width="8" height="9" viewBox="0 0 8 9"><path d="M1 1.2 H5 L2.2 5.6 H7 M5.8 4.4 L7.2 5.6 L5.8 6.8" stroke="#8a8a8a" stroke-width="0.8" fill="none"/></svg>
<svg class="a" style="left:954.50px;top:116.44px" width="9" height="9" viewBox="0 0 9 9"><path d="M1 2 L3.5 4 L6.5 4 L8 2 M3.5 4 L2 8.5 M6 4 L7 8.5 M5 1 V3" stroke="#2f9a72" stroke-width="0.9" fill="none"/></svg>
<svg class="a" style="left:965.30px;top:116.44px" width="9" height="9" viewBox="0 0 9 9"><path d="M1 2 L3.5 4 L6.5 4 L8 2 M3.5 4 L2 8.5 M6 4 L7 8.5 M5 1 V3" stroke="#2f9a72" stroke-width="0.9" fill="none"/></svg>
<svg class="a" style="left:976.50px;top:116.94px" width="8" height="8" viewBox="0 0 8 8"><path d="M1.2 1.3 H6.8 L4 7 Z" stroke="#b97335" stroke-width="1.3" fill="none" stroke-linejoin="round"/></svg>
<svg class="a" style="left:998.00px;top:117.94px" width="8" height="6" viewBox="0 0 8 6"><path d="M0.8 2 Q4 5.2 7.2 2" stroke="#cfcfcf" stroke-width="0.9" fill="none"/></svg>
<svg class="a" style="left:1008.60px;top:116.94px" width="8" height="8" viewBox="0 0 8 8"><rect x="0.6" y="1.8" width="6.8" height="5.4" rx="0.6" fill="#dcdcdc"/><rect x="2.5" y="0.8" width="3" height="1.4" fill="#dcdcdc"/><circle cx="4" cy="4.5" r="1.6" fill="#2a2a2a"/><circle cx="4" cy="4.5" r="0.8" fill="#dcdcdc"/></svg>
<svg class="a" style="left:867.50px;top:128.62px" width="5" height="6" viewBox="0 0 5 6"><path d="M1.3 0.8 L3.6 3 L1.3 5.2" stroke="#6e6e6e" stroke-width="0.8" fill="none"/></svg>
<svg class="a" style="left:875.10px;top:127.12px" width="9" height="9" viewBox="0 0 9 9"><circle cx="4.5" cy="1.6" r="1.2" fill="#c77a38"/><path d="M1 3 L4.5 4 L8 3 M4.5 4 V5.5 L2 8.5 M4.5 5.5 L7 8.5" stroke="#c77a38" stroke-width="1.1" fill="none"/></svg>
<div class="t" style="left:887.60px;top:129.80px;font-size:6.4px;color:#8a8a8a;font-weight:normal;letter-spacing:-0.346px;">TYLER</div>
<svg class="a" style="left:918.00px;top:127.12px" width="8" height="9" viewBox="0 0 8 9"><path d="M1 1.2 H5 L2.2 5.6 H7 M5.8 4.4 L7.2 5.6 L5.8 6.8" stroke="#8a8a8a" stroke-width="0.8" fill="none"/></svg>
<svg class="a" style="left:928.10px;top:127.12px" width="9" height="9" viewBox="0 0 9 9"><path d="M1 2 L3.5 4 L6.5 4 L8 2 M3.5 4 L2 8.5 M6 4 L7 8.5 M5 1 V3" stroke="#2f9a72" stroke-width="0.9" fill="none"/></svg>
<svg class="a" style="left:938.50px;top:127.12px" width="9" height="9" viewBox="0 0 9 9"><path d="M1 2 L3.5 4 L6.5 4 L8 2 M3.5 4 L2 8.5 M6 4 L7 8.5 M5 1 V3" stroke="#2f9a72" stroke-width="0.9" fill="none"/></svg>
<svg class="a" style="left:949.80px;top:127.62px" width="8" height="8" viewBox="0 0 8 8"><path d="M1.2 1.3 H6.8 L4 7 Z" stroke="#b97335" stroke-width="1.3" fill="none" stroke-linejoin="round"/></svg>
<svg class="a" style="left:998.00px;top:128.62px" width="8" height="6" viewBox="0 0 8 6"><path d="M0.8 2 Q4 5.2 7.2 2" stroke="#cfcfcf" stroke-width="0.9" fill="none"/></svg>
<svg class="a" style="left:1008.60px;top:127.62px" width="8" height="8" viewBox="0 0 8 8"><rect x="0.6" y="1.8" width="6.8" height="5.4" rx="0.6" fill="#dcdcdc"/><rect x="2.5" y="0.8" width="3" height="1.4" fill="#dcdcdc"/><circle cx="4" cy="4.5" r="1.6" fill="#2a2a2a"/><circle cx="4" cy="4.5" r="0.8" fill="#dcdcdc"/></svg>
<div class="a" style="left:843px;top:495.3px;width:185px;height:43px;border-radius:4px;overflow:hidden;background:#2e2e2e"></div>
<div class="a" style="left:843.00px;top:495.30px;width:181.00px;height:13.70px;background:#2b2b2b;border-radius:0px;border-radius:4px 0 0 0"></div>
<div class="a" style="left:847.00px;top:497.00px;width:17.00px;height:9.50px;background:#262626;border-radius:2px;"></div>
<svg class="a" style="left:849px;top:497.5px" width="11" height="9" viewBox="0 0 11 9"><rect x="0.5" y="0.8" width="7" height="3.2" rx="1.6" fill="#e6e6e6"/><rect x="0.5" y="5" width="7" height="3.2" rx="1.6" fill="#e6e6e6"/><circle cx="2.2" cy="2.4" r="1" fill="#333"/><circle cx="5.8" cy="6.6" r="1" fill="#333"/><path d="M8.5 3.5 L9.5 4.5 L10.5 3.5" stroke="#bbb" stroke-width="0.7" fill="none"/></svg>
<div class="a" style="left:902.50px;top:497.00px;width:61.80px;height:8.70px;background:#1e1e1e;border-radius:2px;"></div>
<svg class="a" style="left:904px;top:497.5px" width="8" height="8" viewBox="0 0 8 8"><circle cx="3.2" cy="3.2" r="2.2" fill="none" stroke="#ccc" stroke-width="0.8"/><path d="M4.8 4.8 L7.3 7.3" stroke="#ccc" stroke-width="0.9"/></svg>
<div class="t" style="left:915.50px;top:499.54px;font-size:6.2px;color:#5c5c5c;font-weight:normal;letter-spacing:-0.191px;">Search</div>
<div class="a" style="left:1009.00px;top:497.00px;width:9.00px;height:9.00px;background:#262626;border-radius:2px;"></div>
<svg class="a" style="left:1011.00px;top:499.50px" width="5" height="4" viewBox="0 0 5 4"><path d="M1 1.2 L2.5 2.7 L4 1.2" stroke="#aaa" stroke-width="0.9" fill="none" stroke-linecap="round"/></svg>
<div class="a" style="left:843.00px;top:509.00px;width:16.00px;height:29.50px;background:#1f1f1f;border-radius:0px;border-radius:0 0 0 4px"></div>
<svg class="a" style="left:847px;top:535px" width="9" height="4" viewBox="0 0 9 4"><path d="M1.5 4 Q4.5 0 7.5 4" stroke="#999" stroke-width="0.8" fill="none"/></svg>
<svg class="a" style="left:847px;top:516px" width="9" height="10" viewBox="0 0 9 10"><path d="M2 1 V5 M1 5 H3 V9 H1 Z M6 1 V3 M8 1 V3 M5.2 3 Q7 5 8.8 3 M7 4.2 V9" stroke="#ddd" stroke-width="0.9" fill="#ddd"/></svg>
<div class="a" style="left:861.00px;top:509.00px;width:157.00px;height:29.50px;background:#303030;border-radius:0px;"></div>
<div class="a" style="left:1018.50px;top:512.00px;width:2.00px;height:24.00px;background:#3a3a3a;border-radius:1px;"></div>
<div class="a" style="left:929.00px;top:516.80px;width:85.00px;height:9.60px;background:#545454;border-radius:2px;"></div>
<div class="a" style="left:929.00px;top:527.30px;width:85.00px;height:9.70px;background:#545454;border-radius:2px;"></div>
<div class="t" style="right:100.40px;top:519.05px;font-size:6.5px;color:#d4d4d4;font-weight:normal;letter-spacing:-0.065px;">Frame Start</div>
<div class="t" style="left:971.50px;transform:translateX(-50%);top:519.05px;font-size:6.5px;color:#e6e6e6;font-weight:normal;">1</div>
<div class="t" style="right:100.40px;top:529.65px;font-size:6.5px;color:#d4d4d4;font-weight:normal;letter-spacing:-0.189px;">End</div>
<div class="t" style="left:971.50px;transform:translateX(-50%);top:529.65px;font-size:6.5px;color:#e6e6e6;font-weight:normal;">120</div>
</body></html>
